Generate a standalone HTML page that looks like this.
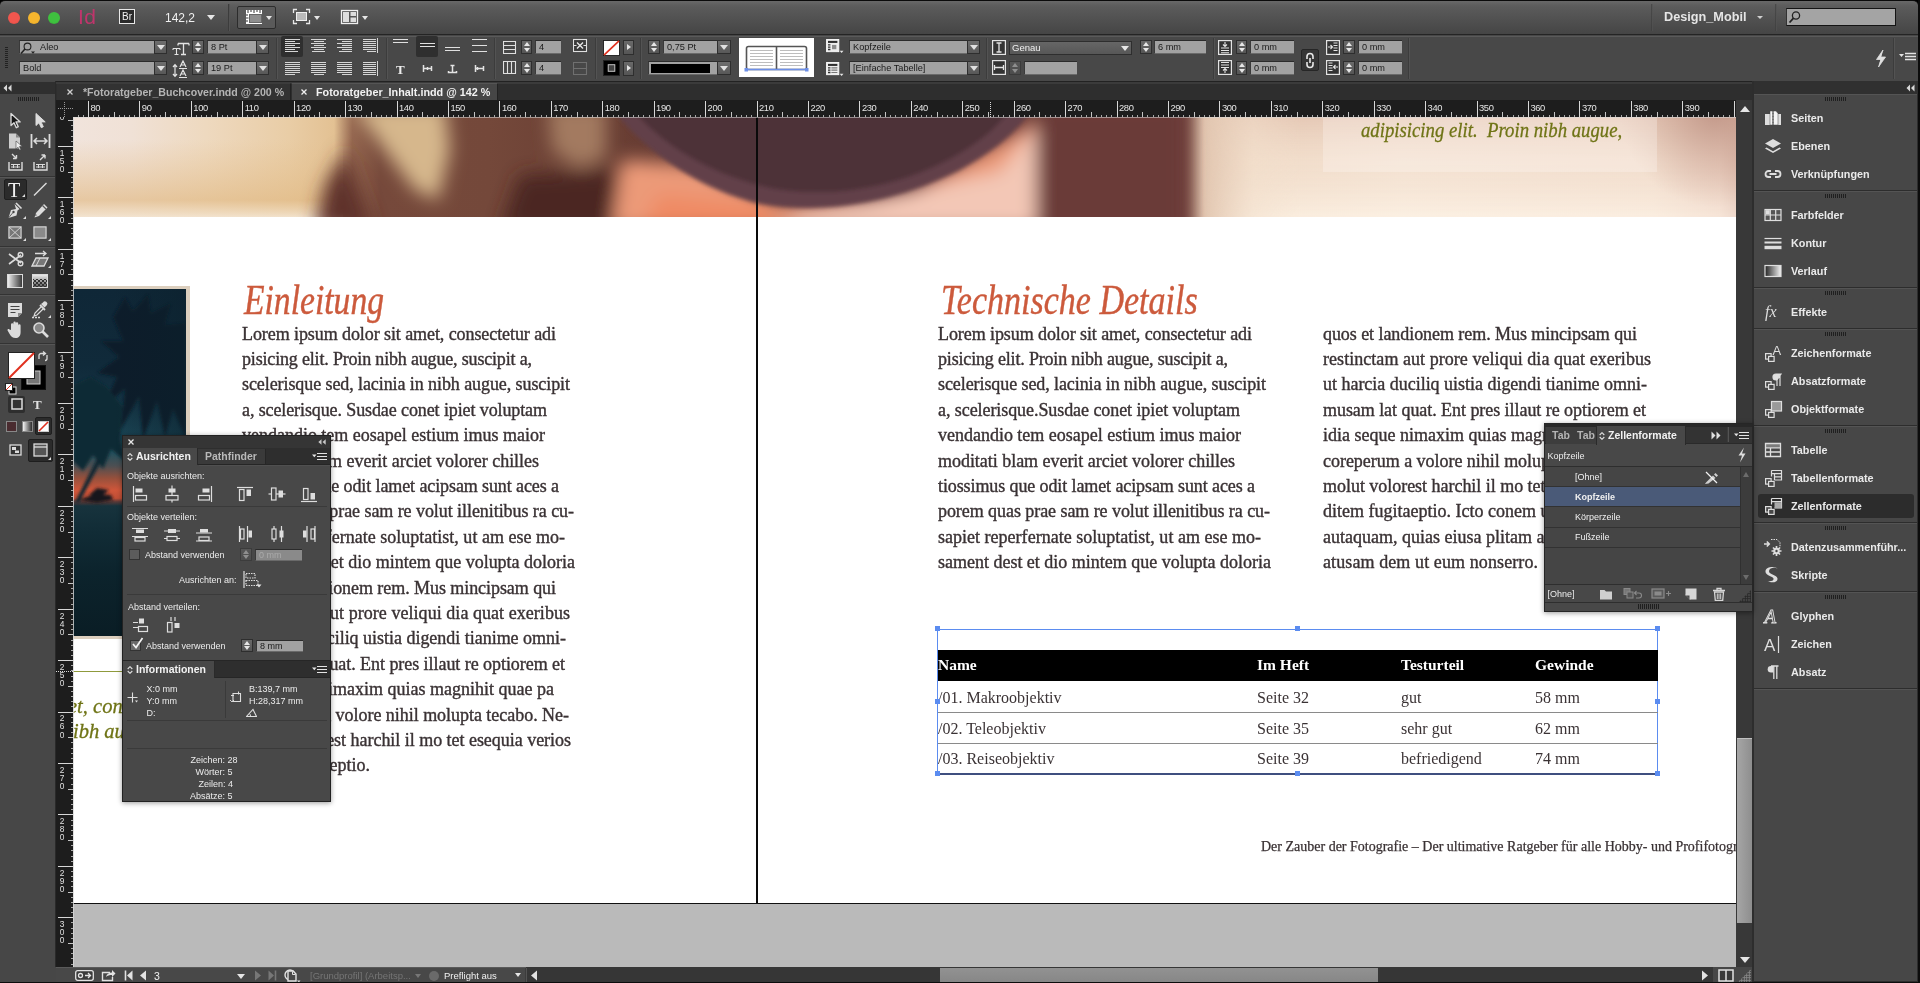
<!DOCTYPE html>
<html lang="de"><head><meta charset="utf-8"><title>InDesign – Fotoratgeber_Inhalt.indd</title>
<style>
html,body{margin:0;padding:0;width:1920px;height:983px;overflow:hidden;background:#474747;}
body{position:relative;font-family:"Liberation Sans",sans-serif;font-size:10px;color:#e8e8e8;}
div,span,svg{position:absolute;box-sizing:border-box;}
#root{left:0;top:0;width:1920px;height:983px;will-change:transform;overflow:hidden;}
.t{white-space:nowrap;line-height:1;}
.b{font-weight:bold;}
.fld{background:#a2a2a2;border-top:1px solid #2b2b2b;border-left:1px solid #3a3a3a;border-bottom:1px solid #6a6a6a;color:#1a1a1a;font-size:9.2px;}
.fld .t{left:3px;top:2px;}
.dd{background:linear-gradient(#6e6e6e,#585858);border:1px solid #2e2e2e;}
.dd:after{content:"";position:absolute;left:50%;top:50%;margin:-2px 0 0 -4px;border-left:4px solid transparent;border-right:4px solid transparent;border-top:5px solid #e0e0e0;}
.stp{background:linear-gradient(#6a6a6a,#555);border:1px solid #2e2e2e;}
.stp:before{content:"";position:absolute;left:50%;top:1px;margin-left:-3px;border-left:3px solid transparent;border-right:3px solid transparent;border-bottom:4px solid #e6e6e6;}
.stp:after{content:"";position:absolute;left:50%;bottom:1px;margin-left:-3px;border-left:3px solid transparent;border-right:3px solid transparent;border-top:4px solid #e6e6e6;}
.vsep{width:2px;background:linear-gradient(90deg,#3c3c3c 50%,#535353 50%);}
.body{font-family:"Liberation Serif",serif;color:#3a3234;font-size:18px;-webkit-text-stroke:0.38px #3a3234;}
.body .t{left:0;}
.script{font-family:"Liberation Serif",serif;font-style:italic;}
.ui9{font-size:9px;color:#ececec;}
</style></head><body><div id="root">
<div id="canvas" style="left:73px;top:117px;width:1663px;height:850px;background:#bababa;overflow:hidden;">
<div style="left:0;top:0;width:1663px;height:786px;background:#fff;"></div>
<svg style="left:0;top:0;" width="1663" height="100" viewBox="73 117 1663 100">
<defs>
<linearGradient id="bg1" gradientUnits="userSpaceOnUse" x1="73" x2="1736" y1="0" y2="0">
<stop offset="0" stop-color="#f1e4dc"/><stop offset="0.035" stop-color="#f0e1d6"/><stop offset="0.08" stop-color="#eed9bf"/><stop offset="0.13" stop-color="#e9cda6"/><stop offset="0.157" stop-color="#e3c193"/>
<stop offset="0.168" stop-color="#94664f"/><stop offset="0.185" stop-color="#76493b"/><stop offset="0.25" stop-color="#74483a"/><stop offset="0.32" stop-color="#6a3f34"/><stop offset="0.40" stop-color="#623731"/>
<stop offset="0.57" stop-color="#6b3b37"/><stop offset="0.655" stop-color="#693936"/><stop offset="0.668" stop-color="#80534a"/><stop offset="0.68" stop-color="#e2c6b0"/><stop offset="0.71" stop-color="#f3e0cd"/><stop offset="0.8" stop-color="#f7e8d9"/><stop offset="0.95" stop-color="#f5e3d4"/><stop offset="0.99" stop-color="#ecd0c2"/><stop offset="1" stop-color="#dcb9ac"/>
</linearGradient>
<linearGradient id="fadeb" x1="0" x2="0" y1="0" y2="1"><stop offset="0" stop-color="#e4bf8c" stop-opacity="0"/><stop offset="0.78" stop-color="#e1b983" stop-opacity="0.65"/><stop offset="0.9" stop-color="#ecd2ae" stop-opacity="0.7"/><stop offset="1" stop-color="#f3e4d0" stop-opacity="0.9"/></linearGradient>
<filter id="bl9" x="-10%" y="-30%" width="120%" height="160%"><feGaussianBlur stdDeviation="9"/></filter>
<filter id="bl3" x="-10%" y="-30%" width="120%" height="160%"><feGaussianBlur stdDeviation="2"/></filter>
</defs>
<rect x="73" y="117" width="1663" height="100" fill="url(#bg1)"/>
<rect x="73" y="140" width="270" height="77" fill="url(#fadeb)"/>
<g filter="url(#bl9)">
<polygon points="352,105 445,105 450,150 438,200 415,190 385,150" fill="#d6b78c"/>
<polygon points="548,105 606,105 606,158 578,168 552,150" fill="#a37a60"/>
<polygon points="325,185 345,150 375,230 315,230" fill="#5e312b"/>
<polygon points="520,175 620,170 630,230 500,230" fill="#4c2722"/>
<polygon points="622,160 700,165 780,205 900,198 1040,120 1040,230 612,230" fill="#ec9a78"/>
<polygon points="660,195 770,205 770,230 640,230" fill="#f08a64"/>
<polygon points="800,214 1000,172 1040,120 1040,230 780,230" fill="#f3c7b6"/>
<rect x="1036" y="100" width="152" height="135" fill="#6a3b37"/>
</g>
<g filter="url(#bl3)">
<path d="M606,100 C640,150 700,190 760,204 C830,216 900,200 960,170 C1000,148 1025,125 1036,100 Z" fill="#62404a"/>
<path d="M625,100 C660,148 720,178 775,189 C840,199 900,185 950,159 C985,139 1005,122 1014,100 Z" fill="#4e3039"/>
</g>
<defs><linearGradient id="rtop" x1="0" x2="0" y1="0" y2="1"><stop offset="0" stop-color="#d9b39f" stop-opacity=".55"/><stop offset="0.45" stop-color="#ecd3c0" stop-opacity=".3"/><stop offset="1" stop-color="#fff6ea" stop-opacity=".55"/></linearGradient>
<radialGradient id="rcorner" gradientUnits="userSpaceOnUse" cx="1715" cy="112" r="95"><stop offset="0" stop-color="#b98c7e" stop-opacity=".75"/><stop offset="1" stop-color="#c8a090" stop-opacity="0"/></radialGradient></defs>
<defs><linearGradient id="mfade" gradientUnits="userSpaceOnUse" x1="1200" x2="1300" y1="0" y2="0"><stop offset="0" stop-color="#000"/><stop offset="1" stop-color="#fff"/></linearGradient><mask id="mk1" maskUnits="userSpaceOnUse" x="1190" y="110" width="560" height="120"><rect x="1190" y="110" width="560" height="120" fill="url(#mfade)"/></mask></defs>
<rect x="1195" y="117" width="541" height="100" fill="url(#rtop)" mask="url(#mk1)"/>
<rect x="1600" y="117" width="136" height="100" fill="url(#rcorner)"/>
</svg>
<div style="left:1250px;top:0;width:334px;height:55px;background:rgba(255,250,246,0.3);"></div>
<div class="t script" style="left:1288px;top:2.500px;font-size:21.5px;color:#6f7416;-webkit-text-stroke:0.3px #6f7416;transform:scaleX(0.872);transform-origin:0 0;">adipisicing elit.&nbsp; Proin nibh augue,</div>
<div style="left:683px;top:0;width:2px;height:786px;background:#0a0a0a;"></div>
<div style="left:0;top:785.5px;width:1663px;height:1.5px;background:#111;"></div>
<div style="left:0;top:169px;width:117px;height:353px;background:#dccfbe;"></div>
<div style="left:0;top:172px;width:113px;height:347px;background:linear-gradient(#0f2737 0%,#102a3a 22%,#143444 33%,#1b4555 42%,#27505c 47.5%,#4d4f52 51%,#96503c 54.5%,#d0563a 58%,#c04f36 60.3%,#5a3a38 61.3%,#17333d 62.5%,#112c36 70%,#0c232c 82%,#0a1d25 100%);"></div>
<svg style="left:0;top:172px;" width="113" height="347" viewBox="0 0 113 347">
<defs><filter id="pb" x="-20%" y="-20%" width="140%" height="140%"><feGaussianBlur stdDeviation="1.6"/></filter>
<linearGradient id="pdk" x1="0" x2="1"><stop offset="0" stop-color="#0b202b" stop-opacity="0"/><stop offset="1" stop-color="#0b202b" stop-opacity=".55"/></linearGradient></defs>
<g filter="url(#pb)" fill="#0b1f2a">
<path d="M40,28 L52,8 L60,22 L75,5 L78,24 L98,14 L92,36 L113,34 L113,150 L100,120 L92,148 L84,112 L70,150 L66,108 L48,140 L52,100 L30,118 L44,88 L24,84 L46,68 L28,52 L50,52 Z"/>
<path d="M0,96 L18,88 L34,98 L50,118 L47,150 L52,172 L38,160 L30,180 L20,166 L10,182 L0,172 Z" fill="#0e2a36"/>
<path d="M24,170 L28,172 L6,214 L2,213 Z" fill="#0d2630"/>
<path d="M6,211 L22,205 L38,206 L40,211 L24,214 Z" fill="#15171d"/>
<path d="M16,206 L24,199 L36,201 L30,206 Z" fill="#15171d"/>
</g>
<rect x="40" y="0" width="73" height="150" fill="url(#pdk)"/>
</svg>
<div style="left:0;top:553.5px;width:200px;height:1.5px;background:#8f9a3c;"></div>
<div class="t script" style="left:-5px;top:579px;font-size:20.500px;color:#6f7416;-webkit-text-stroke:0.3px #6f7416;">et, con</div>
<div class="t script" style="left:0px;top:603.500px;font-size:20.500px;color:#6f7416;-webkit-text-stroke:0.3px #6f7416;">ibh aug</div>
<div class="t script" style="left:171px;top:161.500px;font-size:42px;color:#cc5a3c;-webkit-text-stroke:0.45px #cc5a3c;transform:scaleX(0.80);transform-origin:0 0;">Einleitung</div>
<div class="t script" style="left:867.500px;top:161.500px;font-size:42px;color:#cc5a3c;-webkit-text-stroke:0.45px #cc5a3c;transform:scaleX(0.81);transform-origin:0 0;">Technische Details</div>
<div class="body t" style="left:169px;top:207.5px;letter-spacing:-0.081px;">Lorem ipsum dolor sit amet, consectetur adi</div>
<div class="body t" style="left:169px;top:232.9px;letter-spacing:-0.174px;">pisicing elit. Proin nibh augue, suscipit a,</div>
<div class="body t" style="left:169px;top:258.3px;letter-spacing:-0.083px;">scelerisque sed, lacinia in nibh augue, suscipit</div>
<div class="body t" style="left:169px;top:283.7px;letter-spacing:-0.105px;">a, scelerisque. Susdae conet ipiet voluptam</div>
<div class="body t" style="left:169px;top:309.1px;letter-spacing:-0.012px;">vendandio tem eosapel estium imus maior</div>
<div class="body t" style="left:169px;top:334.5px;letter-spacing:-0.033px;">moditati blam everit arciet volorer chilles</div>
<div class="body t" style="left:169px;top:359.9px;letter-spacing:-0.103px;">tiossimus que odit lamet acipsam sunt aces a</div>
<div class="body t" style="left:169px;top:385.3px;letter-spacing:-0.063px;">porem quas prae sam re volut illenitibus ra cu-</div>
<div class="body t" style="left:169px;top:410.7px;letter-spacing:0.014px;">sapiet reperfernate soluptatist, ut am ese mo-</div>
<div class="body t" style="left:169px;top:436.1px;letter-spacing:-0.010px;">sament dest et dio mintem que volupta doloria</div>
<div class="body t" style="left:169px;top:461.5px;letter-spacing:-0.063px;">quos et landionem rem. Mus mincipsam qui</div>
<div class="body t" style="left:169px;top:486.9px;letter-spacing:0.047px;">restinctam aut prore veliqui dia quat exeribus</div>
<div class="body t" style="left:169px;top:512.3px;letter-spacing:-0.021px;">ut harcia duciliq uistia digendi tianime omni-</div>
<div class="body t" style="left:169px;top:537.7px;letter-spacing:-0.054px;">musam lat quat. Ent pres illaut re optiorem et</div>
<div class="body t" style="left:169px;top:563.1px;letter-spacing:0.002px;">idia seque nimaxim quias magnihit quae pa</div>
<div class="body t" style="left:169px;top:588.5px;letter-spacing:-0.032px;">coreperum a volore nihil molupta tecabo. Ne-</div>
<div class="body t" style="left:169px;top:613.9px;letter-spacing:-0.031px;">molut volorest harchil il mo tet esequia verios</div>
<div class="body t" style="left:169px;top:639.3px;letter-spacing:0.002px;">ditem fugitaeptio.</div>
<div class="body t" style="left:865px;top:207.5px;letter-spacing:-0.081px;">Lorem ipsum dolor sit amet, consectetur adi</div>
<div class="body t" style="left:865px;top:232.9px;letter-spacing:-0.174px;">pisicing elit. Proin nibh augue, suscipit a,</div>
<div class="body t" style="left:865px;top:258.3px;letter-spacing:-0.083px;">scelerisque sed, lacinia in nibh augue, suscipit</div>
<div class="body t" style="left:865px;top:283.7px;letter-spacing:-0.071px;">a, scelerisque.Susdae conet ipiet voluptam</div>
<div class="body t" style="left:865px;top:309.1px;letter-spacing:-0.012px;">vendandio tem eosapel estium imus maior</div>
<div class="body t" style="left:865px;top:334.5px;letter-spacing:-0.033px;">moditati blam everit arciet volorer chilles</div>
<div class="body t" style="left:865px;top:359.9px;letter-spacing:-0.103px;">tiossimus que odit lamet acipsam sunt aces a</div>
<div class="body t" style="left:865px;top:385.3px;letter-spacing:-0.063px;">porem quas prae sam re volut illenitibus ra cu-</div>
<div class="body t" style="left:865px;top:410.7px;letter-spacing:0.014px;">sapiet reperfernate soluptatist, ut am ese mo-</div>
<div class="body t" style="left:865px;top:436.1px;letter-spacing:-0.010px;">sament dest et dio mintem que volupta doloria</div>
<div class="body t" style="left:1250px;top:207.5px;letter-spacing:-0.063px;">quos et landionem rem. Mus mincipsam qui</div>
<div class="body t" style="left:1250px;top:232.9px;letter-spacing:0.047px;">restinctam aut prore veliqui dia quat exeribus</div>
<div class="body t" style="left:1250px;top:258.3px;letter-spacing:-0.021px;">ut harcia duciliq uistia digendi tianime omni-</div>
<div class="body t" style="left:1250px;top:283.7px;letter-spacing:-0.054px;">musam lat quat. Ent pres illaut re optiorem et</div>
<div class="body t" style="left:1250px;top:309.1px;letter-spacing:0.002px;">idia seque nimaxim quias magnihit quae pa</div>
<div class="body t" style="left:1250px;top:334.5px;letter-spacing:-0.032px;">coreperum a volore nihil molupta tecabo. Ne-</div>
<div class="body t" style="left:1250px;top:359.9px;letter-spacing:-0.031px;">molut volorest harchil il mo tet esequia verios</div>
<div class="body t" style="left:1250px;top:385.3px;">ditem fugitaeptio. Icto conem ut</div>
<div class="body t" style="left:1250px;top:410.7px;">autaquam, quias eiusa plitam a</div>
<div class="body t" style="left:1250px;top:436.1px;letter-spacing:0.098px;">atusam dem ut eum nonserro.</div>
<div style="left:864px;top:512px;width:721px;height:146px;border:1px solid #5b8cf0;"></div>
<div style="left:865px;top:533px;width:720px;height:31px;background:#000;"></div>
<div style="left:865px;top:595.0px;width:720px;height:1px;background:#8a8a8a;"></div>
<div style="left:865px;top:626.0px;width:720px;height:1px;background:#8a8a8a;"></div>
<div style="left:865px;top:656.0px;width:720px;height:1.5px;background:#3f4f7f;"></div>
<div class="t b" style="left:865px;top:540px;font-family:'Liberation Serif',serif;font-size:15.5px;color:#fff;">Name</div>
<div class="t b" style="left:1184px;top:540px;font-family:'Liberation Serif',serif;font-size:15.5px;color:#fff;">Im Heft</div>
<div class="t b" style="left:1328px;top:540px;font-family:'Liberation Serif',serif;font-size:15.5px;color:#fff;">Testurteil</div>
<div class="t b" style="left:1462px;top:540px;font-family:'Liberation Serif',serif;font-size:15.5px;color:#fff;">Gewinde</div>
<div class="t" style="left:865px;top:573px;font-family:'Liberation Serif',serif;font-size:16px;color:#3a3234;">/01. Makroobjektiv</div>
<div class="t" style="left:1184px;top:573px;font-family:'Liberation Serif',serif;font-size:16px;color:#3a3234;">Seite 32</div>
<div class="t" style="left:1328px;top:573px;font-family:'Liberation Serif',serif;font-size:16px;color:#3a3234;">gut</div>
<div class="t" style="left:1462px;top:573px;font-family:'Liberation Serif',serif;font-size:16px;color:#3a3234;">58 mm</div>
<div class="t" style="left:865px;top:604px;font-family:'Liberation Serif',serif;font-size:16px;color:#3a3234;">/02. Teleobjektiv</div>
<div class="t" style="left:1184px;top:604px;font-family:'Liberation Serif',serif;font-size:16px;color:#3a3234;">Seite 35</div>
<div class="t" style="left:1328px;top:604px;font-family:'Liberation Serif',serif;font-size:16px;color:#3a3234;">sehr gut</div>
<div class="t" style="left:1462px;top:604px;font-family:'Liberation Serif',serif;font-size:16px;color:#3a3234;">62 mm</div>
<div class="t" style="left:865px;top:634px;font-family:'Liberation Serif',serif;font-size:16px;color:#3a3234;">/03. Reiseobjektiv</div>
<div class="t" style="left:1184px;top:634px;font-family:'Liberation Serif',serif;font-size:16px;color:#3a3234;">Seite 39</div>
<div class="t" style="left:1328px;top:634px;font-family:'Liberation Serif',serif;font-size:16px;color:#3a3234;">befriedigend</div>
<div class="t" style="left:1462px;top:634px;font-family:'Liberation Serif',serif;font-size:16px;color:#3a3234;">74 mm</div>
<div style="left:862px;top:509px;width:5px;height:5px;background:#5b8cf0;"></div>
<div style="left:1222px;top:509px;width:5px;height:5px;background:#5b8cf0;"></div>
<div style="left:1582px;top:509px;width:5px;height:5px;background:#5b8cf0;"></div>
<div style="left:862px;top:582px;width:5px;height:5px;background:#5b8cf0;"></div>
<div style="left:1582px;top:582px;width:5px;height:5px;background:#5b8cf0;"></div>
<div style="left:862px;top:654px;width:5px;height:5px;background:#5b8cf0;"></div>
<div style="left:1222px;top:654px;width:5px;height:5px;background:#5b8cf0;"></div>
<div style="left:1582px;top:654px;width:5px;height:5px;background:#5b8cf0;"></div>
<div class="t" style="left:1188px;top:723px;font-family:'Liberation Serif',serif;font-size:14px;color:#3a3234;-webkit-text-stroke:0.25px #3a3234;">Der Zauber der Fotografie – Der ultimative Ratgeber für alle Hobby- und Profifotografen</div>
</div>
<!-- chrome -->
<div style="left:0;top:0;width:1920px;height:8px;background:#000;"></div>
<div style="left:0;top:0;width:1918px;height:35px;background:linear-gradient(#686868 0%,#5e5e5e 12%,#5a5a5a 20%,#454545 100%);border-bottom:1px solid #242424;border-top:1px solid #0a0a0a;border-radius:5px 5px 0 0;"></div>
<div style="left:8.0px;top:11.500px;width:12px;height:12px;border-radius:6px;background:radial-gradient(circle at 50% 40%,#f0564e 60%,#c8403a 100%);"></div>
<div style="left:27.5px;top:11.500px;width:12px;height:12px;border-radius:6px;background:radial-gradient(circle at 50% 40%,#f5b52e 60%,#d09a20 100%);"></div>
<div style="left:48.0px;top:11.500px;width:12px;height:12px;border-radius:6px;background:radial-gradient(circle at 50% 40%,#3fc13f 60%,#2a9a2c 100%);"></div>
<div class="t" style="left:78px;top:6px;font-size:21px;color:#c0356c;font-family:'Liberation Sans',sans-serif;letter-spacing:0.5px;">Id</div>
<div style="left:119px;top:9px;width:16px;height:15px;border:1px solid #e8e8e8;background:#2a2a2a;"></div><div class="t" style="left:122px;top:11.5px;font-size:10px;color:#f0f0f0;">Br</div>
<div class="t" style="left:165px;top:11.5px;font-size:12px;color:#f0f0f0;">142,2</div>
<div style="left:207.0px;top:15.0px;width:0;height:0;border-left:4.0px solid transparent;border-right:4.0px solid transparent;border-top:5px solid #e6e6e6;"></div>
<div class="vsep" style="left:228px;top:4px;height:27px;"></div>
<div style="left:237px;top:6px;width:39px;height:23px;background:#5a5a5a;border:1px solid #2c2c2c;border-radius:2px;"></div>
<svg style="left:245px;top:9px" width="20" height="16" viewBox="0 0 20 16"><rect x="1" y="1" width="16" height="14" fill="#fff"/><rect x="4.500" y="5.500" width="12" height="8" fill="#8e8e8e" stroke="#666"/><path d="M3,1v3M6,1v2M9,1v3M12,1v2M15,1v3M1,6h2M1,9h2.500M1,12h2" stroke="#333" stroke-width="1"/></svg>
<div style="left:265.5px;top:16.0px;width:0;height:0;border-left:3.5px solid transparent;border-right:3.5px solid transparent;border-top:4px solid #e6e6e6;"></div>
<svg style="left:292px;top:8px" width="20" height="18" viewBox="0 0 20 18"><path d="M1.5,5V1.5H5M14,1.5h3.5V5M17.5,12v3.5H14M5,15.5H1.5V12" fill="none" stroke="#e8e8e8" stroke-width="1.3"/><rect x="4.5" y="4.5" width="10" height="8" fill="#bbb" stroke="#f0f0f0"/></svg>
<div style="left:313.5px;top:16.0px;width:0;height:0;border-left:3.5px solid transparent;border-right:3.5px solid transparent;border-top:4px solid #e6e6e6;"></div>
<svg style="left:340px;top:8px" width="20" height="18" viewBox="0 0 20 18"><rect x="1.5" y="2.5" width="16" height="13" fill="#555" stroke="#f0f0f0" stroke-width="1.3"/><rect x="3" y="4" width="6" height="10" fill="#ddd"/><rect x="10.5" y="4" width="5.5" height="4" fill="#ddd"/><rect x="10.5" y="9.5" width="5.5" height="4.5" fill="#ddd"/></svg>
<div style="left:361.5px;top:16.0px;width:0;height:0;border-left:3.5px solid transparent;border-right:3.5px solid transparent;border-top:4px solid #e6e6e6;"></div>
<div class="vsep" style="left:1651px;top:4px;height:27px;opacity:.6"></div><div class="vsep" style="left:1775px;top:4px;height:27px;opacity:.6"></div>
<div class="t b" style="left:1664px;top:11px;font-size:12.700px;color:#e6e6e6;">Design_Mobil</div>
<div style="left:1757.0px;top:15.8px;width:0;height:0;border-left:3.0px solid transparent;border-right:3.0px solid transparent;border-top:3px solid #d0d0d0;"></div>
<div style="left:1786px;top:8px;width:110px;height:18px;background:#a4a4a4;border:1px solid #141414;border-left-color:#333;"></div>
<svg style="left:1788px;top:10px" width="14" height="14" viewBox="0 0 14 14"><circle cx="8" cy="5.5" r="3.6" fill="none" stroke="#222" stroke-width="1.3"/><path d="M5.5,8.2L1.5,12.5" stroke="#222" stroke-width="1.8"/></svg>
<div style="left:0;top:36px;width:1920px;height:46px;background:#484848;border-top:1px solid #5a5a5a;border-bottom:1px solid #222;"></div>
<div style="left:5px;top:47px;width:3px;height:21px;background:repeating-linear-gradient(#222 0,#222 1px,transparent 1px,transparent 2px);"></div>
<div class="fld" style="left:19px;top:40.0px;width:135px;height:14px;"><span class="t"><span style="position:static;margin-left:17px">Aleo</span></span></div>
<div class="dd" style="left:154px;top:40.0px;width:13px;height:14px;"></div>
<svg style="left:20px;top:42px" width="18" height="13" viewBox="0 0 18 13"><circle cx="7.5" cy="4.5" r="3.4" fill="none" stroke="#222" stroke-width="1.1"/><path d="M5,7L1,11.5" stroke="#222" stroke-width="1.6"/><path d="M11,9.5h4l-2,2.2z" fill="#222"/></svg>
<div class="fld" style="left:19px;top:61.0px;width:135px;height:14px;"><span class="t">Bold</span></div>
<div class="dd" style="left:154px;top:61.0px;width:13px;height:14px;"></div>
<svg style="left:172px;top:40px" width="18" height="17" viewBox="0 0 18 17"><g fill="none" stroke="#e4e4e4" stroke-width="1.3"><path d="M6,3.5h11M11.5,3.5v11M9,14.5h5M6,3.5v2M17,3.5v2"/><path d="M1,8.5h7M4.5,8.5v6M2.5,14.5h4M1,8.5v1.5M8,8.5v1.5" stroke-width="1.1"/></g></svg>
<svg style="left:172px;top:60px" width="18" height="18" viewBox="0 0 18 18"><g fill="none" stroke="#e4e4e4" stroke-width="1.2"><path d="M8,7L11,1l3,6M9,5h4M7,8.5h8M8,16l3-6 3,6M9,14h4M7,17.5h8"/><path d="M3,5v11M1,7l2-2.4 2,2.4M1,14l2,2.4 2-2.4"/></g></svg>
<div class="stp" style="left:192px;top:40.0px;width:12px;height:14px;"></div>
<div class="fld" style="left:207px;top:40.0px;width:49px;height:14px;"><span class="t">8 Pt</span></div>
<div class="dd" style="left:256px;top:40.0px;width:13px;height:14px;"></div>
<div class="stp" style="left:192px;top:61.0px;width:12px;height:14px;"></div>
<div class="fld" style="left:207px;top:61.0px;width:49px;height:14px;"><span class="t">19 Pt</span></div>
<div class="dd" style="left:256px;top:61.0px;width:13px;height:14px;"></div>
<div class="vsep" style="left:276px;top:38px;height:41px;"></div>
<div style="left:281px;top:36px;width:22px;height:21px;background:#2f2f2f;border-radius:2px;"></div>
<svg style="left:285.0px;top:39.0px" width="15" height="13" viewBox="0 0 15 13" shape-rendering="crispEdges"><rect x="0.0" y="0" width="15.0" height="1" fill="#d6d6d6"/><rect x="0.0" y="2" width="10.0" height="1" fill="#d6d6d6"/><rect x="0.0" y="4" width="15.0" height="1" fill="#d6d6d6"/><rect x="0.0" y="6" width="10.0" height="1" fill="#d6d6d6"/><rect x="0.0" y="8" width="15.0" height="1" fill="#d6d6d6"/><rect x="0.0" y="10" width="10.0" height="1" fill="#d6d6d6"/><rect x="0.0" y="12" width="13.0" height="1" fill="#d6d6d6"/></svg>
<svg style="left:311.0px;top:39.0px" width="15" height="13" viewBox="0 0 15 13" shape-rendering="crispEdges"><rect x="0.0" y="0" width="15.0" height="1" fill="#d6d6d6"/><rect x="2.5" y="2" width="10.0" height="1" fill="#d6d6d6"/><rect x="0.0" y="4" width="15.0" height="1" fill="#d6d6d6"/><rect x="2.5" y="6" width="10.0" height="1" fill="#d6d6d6"/><rect x="0.0" y="8" width="15.0" height="1" fill="#d6d6d6"/><rect x="2.5" y="10" width="10.0" height="1" fill="#d6d6d6"/><rect x="1.0" y="12" width="13.0" height="1" fill="#d6d6d6"/></svg>
<svg style="left:337.0px;top:39.0px" width="15" height="13" viewBox="0 0 15 13" shape-rendering="crispEdges"><rect x="0.0" y="0" width="15.0" height="1" fill="#d6d6d6"/><rect x="5.0" y="2" width="10.0" height="1" fill="#d6d6d6"/><rect x="0.0" y="4" width="15.0" height="1" fill="#d6d6d6"/><rect x="5.0" y="6" width="10.0" height="1" fill="#d6d6d6"/><rect x="0.0" y="8" width="15.0" height="1" fill="#d6d6d6"/><rect x="5.0" y="10" width="10.0" height="1" fill="#d6d6d6"/><rect x="2.0" y="12" width="13.0" height="1" fill="#d6d6d6"/></svg>
<svg style="left:363.0px;top:39.0px" width="13" height="13" viewBox="0 0 13 13" shape-rendering="crispEdges"><rect x="0.0" y="0" width="13.0" height="1" fill="#d6d6d6"/><rect x="0.0" y="2" width="13.0" height="1" fill="#d6d6d6"/><rect x="0.0" y="4" width="13.0" height="1" fill="#d6d6d6"/><rect x="0.0" y="6" width="13.0" height="1" fill="#d6d6d6"/><rect x="0.0" y="8" width="13.0" height="1" fill="#d6d6d6"/><rect x="0.0" y="10" width="13.0" height="1" fill="#d6d6d6"/><rect x="4.0" y="12" width="9.0" height="1" fill="#d6d6d6"/></svg>
<div style="left:377px;top:38px;width:1px;height:15px;background:#d6d6d6"></div>
<svg style="left:285.0px;top:62.0px" width="15" height="13" viewBox="0 0 15 13" shape-rendering="crispEdges"><rect x="0.0" y="0" width="15.0" height="1" fill="#d6d6d6"/><rect x="0.0" y="2" width="15.0" height="1" fill="#d6d6d6"/><rect x="0.0" y="4" width="15.0" height="1" fill="#d6d6d6"/><rect x="0.0" y="6" width="15.0" height="1" fill="#d6d6d6"/><rect x="0.0" y="8" width="15.0" height="1" fill="#d6d6d6"/><rect x="0.0" y="10" width="15.0" height="1" fill="#d6d6d6"/><rect x="0.0" y="12" width="10.0" height="1" fill="#d6d6d6"/></svg>
<svg style="left:311.0px;top:62.0px" width="15" height="13" viewBox="0 0 15 13" shape-rendering="crispEdges"><rect x="0.0" y="0" width="15.0" height="1" fill="#d6d6d6"/><rect x="0.0" y="2" width="15.0" height="1" fill="#d6d6d6"/><rect x="0.0" y="4" width="15.0" height="1" fill="#d6d6d6"/><rect x="0.0" y="6" width="15.0" height="1" fill="#d6d6d6"/><rect x="0.0" y="8" width="15.0" height="1" fill="#d6d6d6"/><rect x="0.0" y="10" width="15.0" height="1" fill="#d6d6d6"/><rect x="2.5" y="12" width="10.0" height="1" fill="#d6d6d6"/></svg>
<svg style="left:337.0px;top:62.0px" width="15" height="13" viewBox="0 0 15 13" shape-rendering="crispEdges"><rect x="0.0" y="0" width="15.0" height="1" fill="#d6d6d6"/><rect x="0.0" y="2" width="15.0" height="1" fill="#d6d6d6"/><rect x="0.0" y="4" width="15.0" height="1" fill="#d6d6d6"/><rect x="0.0" y="6" width="15.0" height="1" fill="#d6d6d6"/><rect x="0.0" y="8" width="15.0" height="1" fill="#d6d6d6"/><rect x="0.0" y="10" width="15.0" height="1" fill="#d6d6d6"/><rect x="5.0" y="12" width="10.0" height="1" fill="#d6d6d6"/></svg>
<svg style="left:363.0px;top:62.0px" width="13" height="13" viewBox="0 0 13 13" shape-rendering="crispEdges"><rect x="0.0" y="0" width="13.0" height="1" fill="#d6d6d6"/><rect x="0.0" y="2" width="13.0" height="1" fill="#d6d6d6"/><rect x="0.0" y="4" width="13.0" height="1" fill="#d6d6d6"/><rect x="0.0" y="6" width="13.0" height="1" fill="#d6d6d6"/><rect x="0.0" y="8" width="13.0" height="1" fill="#d6d6d6"/><rect x="0.0" y="10" width="13.0" height="1" fill="#d6d6d6"/><rect x="0.0" y="12" width="13.0" height="1" fill="#d6d6d6"/></svg>
<div style="left:377px;top:61px;width:1px;height:15px;background:#d6d6d6"></div>
<div class="vsep" style="left:386px;top:38px;height:41px;"></div>
<div style="left:416px;top:36px;width:22px;height:21px;background:#2f2f2f;border-radius:2px;"></div>
<svg style="left:393.0px;top:39.4px" width="15" height="4" viewBox="0 0 15 4" shape-rendering="crispEdges"><rect x="0.0" y="0" width="15.0" height="1.3" fill="#e0e0e0"/><rect x="0.0" y="3" width="15.0" height="1.3" fill="#e0e0e0"/></svg>
<svg style="left:420.0px;top:43.4px" width="15" height="4" viewBox="0 0 15 4" shape-rendering="crispEdges"><rect x="0.0" y="0" width="15.0" height="1.3" fill="#e0e0e0"/><rect x="0.0" y="3" width="15.0" height="1.3" fill="#e0e0e0"/></svg>
<svg style="left:445.0px;top:47.4px" width="15" height="4" viewBox="0 0 15 4" shape-rendering="crispEdges"><rect x="0.0" y="0" width="15.0" height="1.3" fill="#e0e0e0"/><rect x="0.0" y="3" width="15.0" height="1.3" fill="#e0e0e0"/></svg>
<svg style="left:472.0px;top:38.9px" width="15" height="13" viewBox="0 0 15 13" shape-rendering="crispEdges"><rect x="0.0" y="0" width="15.0" height="1.3" fill="#e0e0e0"/><rect x="0.0" y="6" width="15.0" height="1.3" fill="#e0e0e0"/><rect x="0.0" y="12" width="15.0" height="1.3" fill="#e0e0e0"/></svg>
<div class="t b" style="left:396px;top:62.500px;font-family:'Liberation Serif',serif;font-size:13px;color:#ececec;">T</div>
<svg style="left:422px;top:63px" width="11" height="11" viewBox="0 0 11 11"><path d="M1.500,2v7M1.500,5.500h8M9.500,3v5M5.500,4v3" fill="none" stroke="#e4e4e4" stroke-width="1.500"/></svg>
<svg style="left:447px;top:63px" width="11" height="11" viewBox="0 0 11 11"><path d="M1.500,8v1.500h8V8M5.500,9.500V2.500M3.500,2.500h4" fill="none" stroke="#e4e4e4" stroke-width="1.500"/></svg>
<svg style="left:474px;top:63px" width="11" height="11" viewBox="0 0 11 11"><path d="M1.500,2v7M1.500,5.500h8M9.500,3v5M3.500,4v3" fill="none" stroke="#e4e4e4" stroke-width="1.500"/></svg>
<div class="vsep" style="left:494px;top:38px;height:41px;"></div>
<svg style="left:503px;top:40px" width="14" height="15" viewBox="0 0 14 15"><path d="M0.5,1.5h12v12h-12zM0.5,5.5h12M0.5,9.5h12" fill="none" stroke="#e0e0e0" stroke-width="1.1"/></svg>
<svg style="left:503px;top:60px" width="14" height="15" viewBox="0 0 14 15"><path d="M0.5,1.5h12v12h-12zM4.5,1.5v12M8.5,1.5v12" fill="none" stroke="#e0e0e0" stroke-width="1.1"/></svg>
<div class="stp" style="left:521px;top:40.0px;width:11px;height:14px;"></div>
<div class="fld" style="left:535px;top:40.0px;width:26px;height:14px;"><span class="t">4</span></div>
<div class="stp" style="left:521px;top:61.0px;width:11px;height:14px;"></div>
<div class="fld" style="left:535px;top:61.0px;width:26px;height:14px;"><span class="t">4</span></div>
<svg style="left:573px;top:38px" width="15" height="15" viewBox="0 0 15 15"><rect x="0.5" y="1.5" width="13" height="12" fill="#3a3a3a" stroke="#e0e0e0" stroke-width="1.1"/><path d="M4,4.5l6,6M10,4.5l-6,6" stroke="#e8e8e8" stroke-width="1.4"/><path d="M0.5,7.5h3M10.5,7.5h3" stroke="#e0e0e0"/></svg>
<svg style="left:573px;top:61px" width="15" height="15" viewBox="0 0 15 15"><path d="M0.5,1.5h13v12h-13zM0.5,7.5h13" fill="none" stroke="#707070" stroke-width="1.1"/></svg>
<div class="vsep" style="left:595px;top:38px;height:41px;"></div>
<svg style="left:603px;top:39.500px" width="17" height="16" viewBox="0 0 18 17"><rect x="0.5" y="0.5" width="17" height="16" fill="#fff" stroke="#222"/><path d="M1,16L17,1" stroke="#e0301e" stroke-width="1.8"/></svg>
<svg style="left:603px;top:60px" width="17" height="16" viewBox="0 0 18 17"><rect x="0.5" y="0.5" width="17" height="16" fill="#000" stroke="#222"/><rect x="5.5" y="5" width="7" height="7" fill="#444" stroke="#ccc"/></svg>
<div style="left:623px;top:40px;width:11px;height:15px;background:linear-gradient(#6a6a6a,#555);border:1px solid #2e2e2e;"></div><div style="left:627px;top:44px;width:0;height:0;border-top:3.5px solid transparent;border-bottom:3.5px solid transparent;border-left:4.5px solid #e6e6e6;"></div>
<div style="left:623px;top:61px;width:11px;height:15px;background:linear-gradient(#6a6a6a,#555);border:1px solid #2e2e2e;"></div><div style="left:627px;top:65px;width:0;height:0;border-top:3.5px solid transparent;border-bottom:3.5px solid transparent;border-left:4.5px solid #e6e6e6;"></div>
<div class="vsep" style="left:640px;top:38px;height:41px;"></div>
<div class="stp" style="left:648px;top:40.0px;width:12px;height:14px;"></div>
<div class="fld" style="left:663px;top:40.0px;width:54px;height:14px;"><span class="t">0,75 Pt</span></div>
<div class="dd" style="left:717px;top:40.0px;width:14px;height:14px;"></div>
<div class="fld" style="left:648px;top:61.0px;width:69px;height:14px;"></div>
<div style="left:651px;top:64px;width:59px;height:9px;background:#000;"></div>
<div class="dd" style="left:717px;top:61.0px;width:14px;height:14px;"></div>
<svg style="left:739px;top:38px" width="75" height="39" viewBox="0 0 75 39"><rect width="75" height="39" fill="#fff"/><rect x="7.5" y="8.500" width="60" height="23" rx="2" fill="#fff" stroke="#555" stroke-width="1.6"/><path d="M37.500,8.500v23" stroke="#555" stroke-width="1.6"/><g stroke="#bdbdbd" stroke-width="1"><path d="M11,12.500h23M11,15.500h23M11,18.500h23M11,21.500h23M11,24.500h23M11,27.500h23M41,12.500h23M41,15.500h23M41,18.500h23M41,21.500h23M41,24.500h23M41,27.500h23"/></g><path d="M7,31.500h61" stroke="#6d8fe8" stroke-width="1.6"/><rect x="5.500" y="30" width="3.500" height="3.500" fill="#6d8fe8"/><rect x="66" y="30" width="3.500" height="3.500" fill="#6d8fe8"/></svg>
<svg style="left:825.5px;top:39px" width="19" height="15" viewBox="0 0 20 16"><rect x="0.5" y="0.5" width="13" height="13" fill="#ededed" stroke="#fafafa"/><rect x="2" y="2" width="10" height="2.2" fill="#2e2e2e"/><path d="M2,6.2h2.6M2,8.7h2.6M2,11.2h2.6" stroke="#2e2e2e" stroke-width="1.4"/><rect x="6.3" y="6.3" width="4.6" height="4.6" fill="#8c8c8c"/><path d="M14.5,12.5h4l-2,2.3z" fill="#e8e8e8"/></svg>
<svg style="left:825.5px;top:62px" width="19" height="15" viewBox="0 0 20 16"><rect x="0.5" y="0.5" width="13" height="13" fill="#ededed" stroke="#fafafa"/><rect x="2" y="2" width="10" height="2.2" fill="#2e2e2e"/><path d="M2,6.2h2.6M2,8.7h2.6M2,11.2h2.6" stroke="#2e2e2e" stroke-width="1.4"/><path d="M5.6,6.2h6.4M5.6,8.7h6.4M5.6,11.2h6.4" stroke="#777" stroke-width="1.2"/><path d="M14.5,12.5h4l-2,2.3z" fill="#e8e8e8"/></svg>
<div class="fld" style="left:849px;top:40.0px;width:118px;height:14px;"><span class="t">Kopfzeile</span></div>
<div class="dd" style="left:967px;top:40.0px;width:13px;height:14px;"></div>
<div class="fld" style="left:849px;top:61.0px;width:118px;height:14px;"><span class="t">[Einfache Tabelle]</span></div>
<div class="dd" style="left:967px;top:61.0px;width:13px;height:14px;"></div>
<div class="vsep" style="left:986px;top:38px;height:41px;"></div>
<svg style="left:992px;top:40px" width="14" height="15" viewBox="0 0 14 15"><rect x="0.6" y="0.6" width="12.800" height="13.800" fill="#333" stroke="#e4e4e4" stroke-width="1.2"/><path d="M7,3v9M4.500,3h5M4.500,12h5" stroke="#e4e4e4" stroke-width="1.3"/></svg>
<svg style="left:992px;top:60px" width="14" height="15" viewBox="0 0 14 15"><rect x="0.6" y="0.6" width="12.800" height="13.800" fill="#333" stroke="#e4e4e4" stroke-width="1.2"/><path d="M2.500,7.500h9M2.500,5v5M11.500,5v5" stroke="#e4e4e4" stroke-width="1.3"/></svg>
<div style="left:1009px;top:41px;width:123px;height:14px;background:linear-gradient(#666,#575757);border:1px solid #2e2e2e;"></div><div class="t" style="left:1012px;top:43px;font-size:9.500px;color:#f0f0f0;">Genau</div>
<div style="left:1121.0px;top:46.0px;width:0;height:0;border-left:4.0px solid transparent;border-right:4.0px solid transparent;border-top:5px solid #e6e6e6;"></div>
<div class="stp" style="left:1140px;top:40.0px;width:12px;height:14px;"></div>
<div class="fld" style="left:1154px;top:40.0px;width:52px;height:14px;"><span class="t">6 mm</span></div>
<div class="stp" style="left:1009px;top:61.0px;width:12px;height:14px;opacity:.45;"></div>
<div class="fld" style="left:1024px;top:61.0px;width:53px;height:14px;"></div>
<div class="vsep" style="left:1213px;top:38px;height:41px;"></div>
<svg style="left:1218px;top:40px" width="14" height="15" viewBox="0 0 14 15"><rect x="0.6" y="0.6" width="12.800" height="13.800" fill="#333" stroke="#e4e4e4" stroke-width="1.2"/><path d="M3,8h8M3,10.500h8M3,12.800h8M7,2v4M5,4.500l2,2 2-2" stroke="#e4e4e4" stroke-width="1.1" fill="none"/></svg>
<svg style="left:1218px;top:60px" width="14" height="15" viewBox="0 0 14 15"><rect x="0.6" y="0.6" width="12.800" height="13.800" fill="#333" stroke="#e4e4e4" stroke-width="1.2"/><path d="M3,2.500h8M3,5h8M3,7.500h8M7,13v-4M5,10.500l2-2 2,2" stroke="#e4e4e4" stroke-width="1.1" fill="none"/></svg>
<div class="stp" style="left:1236px;top:40.0px;width:11px;height:14px;"></div>
<div class="fld" style="left:1250px;top:40.0px;width:44px;height:14px;"><span class="t">0 mm</span></div>
<div class="stp" style="left:1236px;top:61.0px;width:11px;height:14px;"></div>
<div class="fld" style="left:1250px;top:61.0px;width:44px;height:14px;"><span class="t">0 mm</span></div>
<div style="left:1301px;top:49px;width:18px;height:22px;background:#363636;border:1px solid #262626;border-radius:2px;"></div>
<svg style="left:1304px;top:52px" width="12" height="17" viewBox="0 0 12 17"><path d="M3,7V4.500a3,3 0 0 1 6,0V7M3,10v2.500a3,3 0 0 0 6,0V10M6,6v5" fill="none" stroke="#e8e8e8" stroke-width="1.6"/></svg>
<svg style="left:1326px;top:40px" width="14" height="15" viewBox="0 0 14 15"><rect x="0.6" y="0.6" width="12.800" height="13.800" fill="#333" stroke="#e4e4e4" stroke-width="1.2"/><path d="M7.500,3h4M7.500,5.500h4M7.500,8h4M7.500,10.500h4M2,7h4M4.500,5l2,2-2,2" stroke="#e4e4e4" stroke-width="1.1" fill="none"/></svg>
<svg style="left:1326px;top:60px" width="14" height="15" viewBox="0 0 14 15"><rect x="0.6" y="0.6" width="12.800" height="13.800" fill="#333" stroke="#e4e4e4" stroke-width="1.2"/><path d="M2.500,3h4M2.500,5.500h4M2.500,8h4M2.500,10.500h4M12,7h-4M9.500,5l-2,2 2,2" stroke="#e4e4e4" stroke-width="1.1" fill="none"/></svg>
<div class="stp" style="left:1343px;top:40.0px;width:12px;height:14px;"></div>
<div class="fld" style="left:1358px;top:40.0px;width:44px;height:14px;"><span class="t">0 mm</span></div>
<div class="stp" style="left:1343px;top:61.0px;width:12px;height:14px;"></div>
<div class="fld" style="left:1358px;top:61.0px;width:44px;height:14px;"><span class="t">0 mm</span></div>
<div class="vsep" style="left:1408px;top:38px;height:41px;"></div>
<svg style="left:1874px;top:49px" width="14" height="19" viewBox="0 0 14 19"><path d="M9,1L2.500,10.500h4.500L4.500,18M9,1L6.500,8h5L4.500,18" fill="#e0e0e0" stroke="#e0e0e0" stroke-width="0.8" stroke-linejoin="round"/></svg>
<div class="vsep" style="left:1893px;top:38px;height:41px;"></div>
<svg style="left:1899px;top:51px" width="17" height="12" viewBox="0 0 17 12"><path d="M0,3h5l-2.500,3z" fill="#e4e4e4"/><path d="M6,2.500h11M6,5.500h11M6,8.500h11" stroke="#e4e4e4" stroke-width="1.3"/></svg>
<div style="left:0;top:82px;width:1920px;height:19px;background:#2e2e2e;border-top:2px solid #3b3b3b;"></div>
<div style="left:57px;top:83px;width:234px;height:18px;background:#323232;border-right:1px solid #222;border-top:1px solid #3c3c3c;"></div>
<div style="left:292px;top:83px;width:206px;height:18px;background:#464646;border-right:1px solid #222;border-top:1px solid #555;"></div>
<svg style="left:66px;top:88px" width="8" height="8" viewBox="0 0 8 8"><path d="M1.500,1.500l5,5M6.500,1.500l-5,5" stroke="#cfcfcf" stroke-width="1.300"/></svg>
<svg style="left:300px;top:88px" width="8" height="8" viewBox="0 0 8 8"><path d="M1.500,1.500l5,5M6.500,1.500l-5,5" stroke="#f0f0f0" stroke-width="1.300"/></svg>
<div class="t b" style="left:83px;top:87px;font-size:10.600px;color:#b4b4b4;">*Fotoratgeber_Buchcover.indd @ 200 %</div>
<div class="t b" style="left:316px;top:87px;font-size:10.800px;color:#f2f2f2;">Fotoratgeber_Inhalt.indd @ 142 %</div>
<div style="left:56px;top:100px;width:1680px;height:17px;background:#1d1d1d;"></div>
<div style="left:56px;top:100px;width:17px;height:867px;background:#1d1d1d;"></div>
<svg style="left:73px;top:100px" width="1663" height="17" viewBox="73 0 1663 17"><g stroke="#d8d8d8" stroke-width="1" shape-rendering="crispEdges"><path d="M88.4,1V17M139.8,1V17M191.3,1V17M242.7,1V17M294.1,1V17M345.6,1V17M397,1V17M448.4,1V17M499.9,1V17M551.3,1V17M602.7,1V17M654.1,1V17M705.6,1V17M757,1V17M808.4,1V17M859.9,1V17M911.3,1V17M962.7,1V17M1014.1,1V17M1065.6,1V17M1117,1V17M1168.4,1V17M1219.9,1V17M1271.3,1V17M1322.7,1V17M1374.2,1V17M1425.6,1V17M1477,1V17M1528.4,1V17M1579.9,1V17M1631.3,1V17M1682.7,1V17M1734.2,1V17"/><path d="M114.1,12V17M165.6,12V17M217,12V17M268.4,12V17M319.8,12V17M371.3,12V17M422.7,12V17M474.1,12V17M525.6,12V17M577,12V17M628.4,12V17M679.9,12V17M731.3,12V17M782.7,12V17M834.1,12V17M885.6,12V17M937,12V17M988.4,12V17M1039.9,12V17M1091.3,12V17M1142.7,12V17M1194.2,12V17M1245.6,12V17M1297,12V17M1348.4,12V17M1399.9,12V17M1451.3,12V17M1502.7,12V17M1554.2,12V17M1605.6,12V17M1657,12V17M1708.5,12V17" stroke-opacity=".9"/><path d="M78.1,14.5V17M83.3,14.5V17M93.6,14.5V17M98.7,14.5V17M103.8,14.5V17M109,14.5V17M119.3,14.5V17M124.4,14.5V17M129.6,14.5V17M134.7,14.5V17M145,14.5V17M150.1,14.5V17M155.3,14.5V17M160.4,14.5V17M170.7,14.5V17M175.8,14.5V17M181,14.5V17M186.1,14.5V17M196.4,14.5V17M201.6,14.5V17M206.7,14.5V17M211.8,14.5V17M222.1,14.5V17M227.3,14.5V17M232.4,14.5V17M237.6,14.5V17M247.8,14.5V17M253,14.5V17M258.1,14.5V17M263.3,14.5V17M273.6,14.5V17M278.7,14.5V17M283.8,14.5V17M289,14.5V17M299.3,14.5V17M304.4,14.5V17M309.6,14.5V17M314.7,14.5V17M325,14.5V17M330.1,14.5V17M335.3,14.5V17M340.4,14.5V17M350.7,14.5V17M355.8,14.5V17M361,14.5V17M366.1,14.5V17M376.4,14.5V17M381.6,14.5V17M386.7,14.5V17M391.8,14.5V17M402.1,14.5V17M407.3,14.5V17M412.4,14.5V17M417.6,14.5V17M427.8,14.5V17M433,14.5V17M438.1,14.5V17M443.3,14.5V17M453.6,14.5V17M458.7,14.5V17M463.8,14.5V17M469,14.5V17M479.3,14.5V17M484.4,14.5V17M489.6,14.5V17M494.7,14.5V17M505,14.5V17M510.1,14.5V17M515.3,14.5V17M520.4,14.5V17M530.7,14.5V17M535.9,14.5V17M541,14.5V17M546.1,14.5V17M556.4,14.5V17M561.6,14.5V17M566.7,14.5V17M571.9,14.5V17M582.1,14.5V17M587.3,14.5V17M592.4,14.5V17M597.6,14.5V17M607.9,14.5V17M613,14.5V17M618.1,14.5V17M623.3,14.5V17M633.6,14.5V17M638.7,14.5V17M643.9,14.5V17M649,14.5V17M659.3,14.5V17M664.4,14.5V17M669.6,14.5V17M674.7,14.5V17M685,14.5V17M690.1,14.5V17M695.3,14.5V17M700.4,14.5V17M710.7,14.5V17M715.9,14.5V17M721,14.5V17M726.1,14.5V17M736.4,14.5V17M741.6,14.5V17M746.7,14.5V17M751.9,14.5V17M762.1,14.5V17M767.3,14.5V17M772.4,14.5V17M777.6,14.5V17M787.9,14.5V17M793,14.5V17M798.1,14.5V17M803.3,14.5V17M813.6,14.5V17M818.7,14.5V17M823.9,14.5V17M829,14.5V17M839.3,14.5V17M844.4,14.5V17M849.6,14.5V17M854.7,14.5V17M865,14.5V17M870.1,14.5V17M875.3,14.5V17M880.4,14.5V17M890.7,14.5V17M895.9,14.5V17M901,14.5V17M906.1,14.5V17M916.4,14.5V17M921.6,14.5V17M926.7,14.5V17M931.9,14.5V17M942.1,14.5V17M947.3,14.5V17M952.4,14.5V17M957.6,14.5V17M967.9,14.5V17M973,14.5V17M978.1,14.5V17M983.3,14.5V17M993.6,14.5V17M998.7,14.5V17M1003.9,14.5V17M1009,14.5V17M1019.3,14.5V17M1024.4,14.5V17M1029.6,14.5V17M1034.7,14.5V17M1045,14.5V17M1050.2,14.5V17M1055.3,14.5V17M1060.4,14.5V17M1070.7,14.5V17M1075.9,14.5V17M1081,14.5V17M1086.2,14.5V17M1096.4,14.5V17M1101.6,14.5V17M1106.7,14.5V17M1111.9,14.5V17M1122.2,14.5V17M1127.3,14.5V17M1132.4,14.5V17M1137.6,14.5V17M1147.9,14.5V17M1153,14.5V17M1158.2,14.5V17M1163.3,14.5V17M1173.6,14.5V17M1178.7,14.5V17M1183.9,14.5V17M1189,14.5V17M1199.3,14.5V17M1204.4,14.5V17M1209.6,14.5V17M1214.7,14.5V17M1225,14.5V17M1230.2,14.5V17M1235.3,14.5V17M1240.4,14.5V17M1250.7,14.5V17M1255.9,14.5V17M1261,14.5V17M1266.2,14.5V17M1276.4,14.5V17M1281.6,14.5V17M1286.7,14.5V17M1291.9,14.5V17M1302.2,14.5V17M1307.3,14.5V17M1312.4,14.5V17M1317.6,14.5V17M1327.9,14.5V17M1333,14.5V17M1338.2,14.5V17M1343.3,14.5V17M1353.6,14.5V17M1358.7,14.5V17M1363.9,14.5V17M1369,14.5V17M1379.3,14.5V17M1384.4,14.5V17M1389.6,14.5V17M1394.7,14.5V17M1405,14.5V17M1410.2,14.5V17M1415.3,14.5V17M1420.4,14.5V17M1430.7,14.5V17M1435.9,14.5V17M1441,14.5V17M1446.2,14.5V17M1456.4,14.5V17M1461.6,14.5V17M1466.7,14.5V17M1471.9,14.5V17M1482.2,14.5V17M1487.3,14.5V17M1492.4,14.5V17M1497.6,14.5V17M1507.9,14.5V17M1513,14.5V17M1518.2,14.5V17M1523.3,14.5V17M1533.6,14.5V17M1538.7,14.5V17M1543.9,14.5V17M1549,14.5V17M1559.3,14.5V17M1564.5,14.5V17M1569.6,14.5V17M1574.7,14.5V17M1585,14.5V17M1590.2,14.5V17M1595.3,14.5V17M1600.5,14.5V17M1610.7,14.5V17M1615.9,14.5V17M1621,14.5V17M1626.2,14.5V17M1636.5,14.5V17M1641.6,14.5V17M1646.7,14.5V17M1651.9,14.5V17M1662.2,14.5V17M1667.3,14.5V17M1672.5,14.5V17M1677.6,14.5V17M1687.9,14.5V17M1693,14.5V17M1698.2,14.5V17M1703.3,14.5V17M1713.6,14.5V17M1718.7,14.5V17M1723.9,14.5V17M1729,14.5V17" stroke-opacity=".75"/></g><g font-family="Liberation Sans, sans-serif" font-size="9.4" letter-spacing="-0.35" fill="#e6e6e6"><text x="90.4" y="11">80</text><text x="141.8" y="11">90</text><text x="193.3" y="11">100</text><text x="244.7" y="11">110</text><text x="296.1" y="11">120</text><text x="347.6" y="11">130</text><text x="399.0" y="11">140</text><text x="450.4" y="11">150</text><text x="501.9" y="11">160</text><text x="553.3" y="11">170</text><text x="604.7" y="11">180</text><text x="656.1" y="11">190</text><text x="707.6" y="11">200</text><text x="759.0" y="11">210</text><text x="810.4" y="11">220</text><text x="861.9" y="11">230</text><text x="913.3" y="11">240</text><text x="964.7" y="11">250</text><text x="1016.1" y="11">260</text><text x="1067.6" y="11">270</text><text x="1119.0" y="11">280</text><text x="1170.4" y="11">290</text><text x="1221.9" y="11">300</text><text x="1273.3" y="11">310</text><text x="1324.7" y="11">320</text><text x="1376.2" y="11">330</text><text x="1427.6" y="11">340</text><text x="1479.0" y="11">350</text><text x="1530.4" y="11">360</text><text x="1581.9" y="11">370</text><text x="1633.3" y="11">380</text><text x="1684.7" y="11">390</text></g><path d="M990.5,2V17" stroke="#ddd" stroke-dasharray="1,1"/></svg>
<svg style="left:56px;top:117px" width="17" height="850" viewBox="0 117 17 850"><g stroke="#d8d8d8" stroke-width="1" shape-rendering="crispEdges"><path d="M2,146.3H17M2,197.7H17M2,249.2H17M2,300.6H17M2,352H17M2,403.4H17M2,454.9H17M2,506.3H17M2,557.7H17M2,609.2H17M2,660.6H17M2,712H17M2,763.5H17M2,814.9H17M2,866.3H17M2,917.8H17"/><path d="M12,120.6H17M12,172H17M12,223.4H17M12,274.9H17M12,326.3H17M12,377.7H17M12,429.2H17M12,480.6H17M12,532H17M12,583.5H17M12,634.9H17M12,686.3H17M12,737.7H17M12,789.2H17M12,840.6H17M12,892H17M12,943.5H17" stroke-opacity=".9"/><path d="M14.5,125.7H17M14.5,130.9H17M14.5,136H17M14.5,141.2H17M14.5,151.4H17M14.5,156.6H17M14.5,161.7H17M14.5,166.9H17M14.5,177.2H17M14.5,182.3H17M14.5,187.4H17M14.5,192.6H17M14.5,202.9H17M14.5,208H17M14.5,213.2H17M14.5,218.3H17M14.5,228.6H17M14.5,233.7H17M14.5,238.9H17M14.5,244H17M14.5,254.3H17M14.5,259.4H17M14.5,264.6H17M14.5,269.7H17M14.5,280H17M14.5,285.2H17M14.5,290.3H17M14.5,295.4H17M14.5,305.7H17M14.5,310.9H17M14.5,316H17M14.5,321.2H17M14.5,331.4H17M14.5,336.6H17M14.5,341.7H17M14.5,346.9H17M14.5,357.2H17M14.5,362.3H17M14.5,367.4H17M14.5,372.6H17M14.5,382.9H17M14.5,388H17M14.5,393.2H17M14.5,398.3H17M14.5,408.6H17M14.5,413.7H17M14.5,418.9H17M14.5,424H17M14.5,434.3H17M14.5,439.5H17M14.5,444.6H17M14.5,449.7H17M14.5,460H17M14.5,465.2H17M14.5,470.3H17M14.5,475.5H17M14.5,485.7H17M14.5,490.9H17M14.5,496H17M14.5,501.2H17M14.5,511.5H17M14.5,516.6H17M14.5,521.7H17M14.5,526.9H17M14.5,537.2H17M14.5,542.3H17M14.5,547.5H17M14.5,552.6H17M14.5,562.9H17M14.5,568H17M14.5,573.2H17M14.5,578.3H17M14.5,588.6H17M14.5,593.7H17M14.5,598.9H17M14.5,604H17M14.5,614.3H17M14.5,619.5H17M14.5,624.6H17M14.5,629.7H17M14.5,640H17M14.5,645.2H17M14.5,650.3H17M14.5,655.5H17M14.5,665.7H17M14.5,670.9H17M14.5,676H17M14.5,681.2H17M14.5,691.5H17M14.5,696.6H17M14.5,701.7H17M14.5,706.9H17M14.5,717.2H17M14.5,722.3H17M14.5,727.5H17M14.5,732.6H17M14.5,742.9H17M14.5,748H17M14.5,753.2H17M14.5,758.3H17M14.5,768.6H17M14.5,773.7H17M14.5,778.9H17M14.5,784H17M14.5,794.3H17M14.5,799.5H17M14.5,804.6H17M14.5,809.7H17M14.5,820H17M14.5,825.2H17M14.5,830.3H17M14.5,835.5H17M14.5,845.7H17M14.5,850.9H17M14.5,856H17M14.5,861.2H17M14.5,871.5H17M14.5,876.6H17M14.5,881.7H17M14.5,886.9H17M14.5,897.2H17M14.5,902.3H17M14.5,907.5H17M14.5,912.6H17M14.5,922.9H17M14.5,928H17M14.5,933.2H17M14.5,938.3H17M14.5,948.6H17M14.5,953.8H17M14.5,958.9H17M14.5,964H17" stroke-opacity=".75"/></g><g font-family="Liberation Sans, sans-serif" font-size="8.4" fill="#e0e0e0" text-anchor="middle"><text x="6.2" y="104.2">1</text><text x="6.2" y="112.3">4</text><text x="6.2" y="120.4">0</text><text x="6.2" y="155.6">1</text><text x="6.2" y="163.7">5</text><text x="6.2" y="171.8">0</text><text x="6.2" y="207.0">1</text><text x="6.2" y="215.1">6</text><text x="6.2" y="223.2">0</text><text x="6.2" y="258.5">1</text><text x="6.2" y="266.6">7</text><text x="6.2" y="274.7">0</text><text x="6.2" y="309.9">1</text><text x="6.2" y="318.0">8</text><text x="6.2" y="326.1">0</text><text x="6.2" y="361.3">1</text><text x="6.2" y="369.4">9</text><text x="6.2" y="377.5">0</text><text x="6.2" y="412.8">2</text><text x="6.2" y="420.9">0</text><text x="6.2" y="428.9">0</text><text x="6.2" y="464.2">2</text><text x="6.2" y="472.3">1</text><text x="6.2" y="480.4">0</text><text x="6.2" y="515.6">2</text><text x="6.2" y="523.7">2</text><text x="6.2" y="531.8">0</text><text x="6.2" y="567.0">2</text><text x="6.2" y="575.1">3</text><text x="6.2" y="583.2">0</text><text x="6.2" y="618.5">2</text><text x="6.2" y="626.6">4</text><text x="6.2" y="634.7">0</text><text x="6.2" y="669.9">2</text><text x="6.2" y="678.0">5</text><text x="6.2" y="686.1">0</text><text x="6.2" y="721.3">2</text><text x="6.2" y="729.4">6</text><text x="6.2" y="737.5">0</text><text x="6.2" y="772.8">2</text><text x="6.2" y="780.9">7</text><text x="6.2" y="789.0">0</text><text x="6.2" y="824.2">2</text><text x="6.2" y="832.3">8</text><text x="6.2" y="840.4">0</text><text x="6.2" y="875.6">2</text><text x="6.2" y="883.7">9</text><text x="6.2" y="891.8">0</text><text x="6.2" y="927.0">3</text><text x="6.2" y="935.1">0</text><text x="6.2" y="943.2">0</text></g><path d="M0,671.5H17" stroke="#ddd" stroke-dasharray="1,1"/></svg>
<div style="left:73px;top:117px;width:1px;height:850px;background:rgba(215,215,215,.8);"></div><div style="left:73px;top:116.500px;width:1663px;height:1px;background:rgba(215,215,215,.55);"></div>
<svg style="left:56px;top:100px" width="17" height="17" viewBox="0 0 17 17"><path d="M8.500,2V17M2,8.500H17" stroke="#999" stroke-dasharray="1,1"/></svg>
<div style="left:0;top:81px;width:56px;height:902px;background:#474747;border-right:1px solid #2a2a2a;"></div>
<div style="left:0;top:82px;width:55px;height:12px;background:#2f2f2f;"></div>
<svg style="left:3px;top:84px" width="9" height="8" viewBox="0 0 9 8"><path d="M4,0.500v7L0.500,4zM8.500,0.500v7L5,4z" fill="#d8d8d8"/></svg>
<div style="left:18px;top:97px;width:21px;height:4px;background:repeating-linear-gradient(90deg,#1f1f1f 0,#1f1f1f 1px,transparent 1px,transparent 2px);"></div>
<div style="left:0;top:176px;width:55px;height:2px;background:linear-gradient(#333 50%,#565656 50%);"></div>
<div style="left:0;top:246px;width:55px;height:2px;background:linear-gradient(#333 50%,#565656 50%);"></div>
<div style="left:0;top:294px;width:55px;height:2px;background:linear-gradient(#333 50%,#565656 50%);"></div>
<div style="left:0;top:343px;width:55px;height:2px;background:linear-gradient(#333 50%,#565656 50%);"></div>
<svg style="left:8.0px;top:112.0px" width="14" height="18" viewBox="0 0 14 18"><path d="M3,1.500v12l3-2.800 2.300,5 2-1-2.300-4.800h4.200z" fill="#161616" stroke="#dcdcdc" stroke-width="1.300" stroke-linejoin="round"/></svg>
<svg style="left:33.0px;top:112.0px" width="14" height="18" viewBox="0 0 14 18"><path d="M3,1.500v12l3-2.800 2.300,5 2-1-2.300-4.800h4.200z" fill="#dcdcdc" stroke="#dcdcdc" stroke-width="1" stroke-linejoin="round"/></svg>
<svg style="left:7.0px;top:132.0px" width="17" height="18" viewBox="0 0 17 18"><path d="M2,1.500h7l4,4v11h-11z" fill="#cfcfcf"/><path d="M9,1.500v4h4" fill="#888"/><path d="M9,9v8l2-1.800 1.600,3 1.300-.7-1.600-3h3z" fill="#eee" stroke="#444" stroke-width=".6"/></svg>
<svg style="left:30.0px;top:133.0px" width="21" height="16" viewBox="0 0 21 16"><path d="M1.500,1v14M19.500,1v14" stroke="#dcdcdc" stroke-width="1.800"/><path d="M4,8h13M7,5l-3,3 3,3M14,5l3,3-3,3" fill="none" stroke="#dcdcdc" stroke-width="1.500"/></svg>
<svg style="left:7.0px;top:153.0px" width="17" height="18" viewBox="0 0 17 18"><path d="M2,9v8h13v-8" fill="none" stroke="#dcdcdc" stroke-width="1.400"/><path d="M4,11.500h9M4,14h9M6.500,11v4M10.500,11v4" stroke="#dcdcdc"/><path d="M5,1l4.500,4.500M9.500,5.500v-3.500M9.500,5.500h-3.500" stroke="#dcdcdc" stroke-width="1.400" fill="none"/></svg>
<svg style="left:32.0px;top:153.0px" width="17" height="18" viewBox="0 0 17 18"><path d="M2,9v8h13v-8" fill="none" stroke="#dcdcdc" stroke-width="1.400"/><path d="M4,11.500h9M4,14h9M6.500,11v4M10.500,11v4" stroke="#dcdcdc"/><path d="M8,7l5-5M13,2v3.500M13,2h-3.500" stroke="#dcdcdc" stroke-width="1.400" fill="none"/></svg>
<div style="left:4px;top:179px;width:23px;height:21px;background:#2b2b2b;border:1px solid #1e1e1e;border-radius:2px;"></div>
<div class="t" style="left:8px;top:180px;font-family:'Liberation Serif',serif;font-size:20px;color:#f0f0f0;">T</div>
<div style="left:22px;top:194px;width:0;height:0;border-left:3px solid transparent;border-bottom:3px solid #ddd;"></div>
<svg style="left:32.0px;top:181.0px" width="16" height="16" viewBox="0 0 16 16"><path d="M2,14.500L14.500,2" stroke="#dcdcdc" stroke-width="1.500"/></svg>
<svg style="left:5.0px;top:202.0px" width="18" height="18" viewBox="0 0 18 18"><path d="M9.500,2l5,5-2,1.500-1,5-8,2.500 2.500-8 5-1z" fill="#dcdcdc"/><circle cx="8.500" cy="10" r="1.200" fill="#444"/><path d="M3.500,16l4.500-5.500" stroke="#444" stroke-width=".8"/><path d="M11,1l5.500,5.500" stroke="#dcdcdc" stroke-width="1.600"/></svg>
<svg style="left:32.0px;top:202.0px" width="18" height="18" viewBox="0 0 18 18"><path d="M12,2l3.500,3.500-8.500,8.500-4.500,1.500 1.500-4.500z" fill="#dcdcdc"/><path d="M10.500,3.500l3.500,3.500" stroke="#555" stroke-width="1.200"/><path d="M3.200,13.800l1.700,-.5-1.200-1.200z" fill="#333"/></svg>
<div style="left:23px;top:216px;width:0;height:0;border-left:3px solid transparent;border-bottom:3px solid #ddd;"></div>
<div style="left:48px;top:216px;width:0;height:0;border-left:3px solid transparent;border-bottom:3px solid #ddd;"></div>
<svg style="left:8.0px;top:226.0px" width="14" height="13" viewBox="0 0 16 15"><rect x="1" y="1" width="14" height="13" fill="#777" stroke="#dcdcdc" stroke-width="1.300"/><path d="M1,1l14,13M15,1l-14,13" stroke="#dcdcdc"/></svg>
<svg style="left:33.0px;top:226.0px" width="14" height="13" viewBox="0 0 16 15"><rect x="1" y="1" width="14" height="13" fill="#8a8a8a" stroke="#dcdcdc" stroke-width="1.300"/></svg>
<div style="left:23px;top:238px;width:0;height:0;border-left:3px solid transparent;border-bottom:3px solid #ddd;"></div>
<div style="left:48px;top:238px;width:0;height:0;border-left:3px solid transparent;border-bottom:3px solid #ddd;"></div>
<svg style="left:6.0px;top:251.0px" width="19" height="17" viewBox="0 0 19 17"><path d="M3,3l12,9M3,13l12,-9" stroke="#dcdcdc" stroke-width="1.600"/><circle cx="14.500" cy="12.500" r="2.300" fill="none" stroke="#dcdcdc" stroke-width="1.400"/><circle cx="14.500" cy="3.800" r="2.300" fill="none" stroke="#dcdcdc" stroke-width="1.400"/></svg>
<svg style="left:31.0px;top:250.0px" width="19" height="18" viewBox="0 0 19 18"><path d="M4,3.500h11M12,1l3,2.500-3,2.500" fill="none" stroke="#dcdcdc" stroke-width="1.300"/><path d="M5,8h12l-4,8h-12z" fill="#777" stroke="#dcdcdc" stroke-width="1.300"/><path d="M9,8l-4,8" stroke="#dcdcdc"/></svg>
<div style="left:48px;top:265px;width:0;height:0;border-left:3px solid transparent;border-bottom:3px solid #ddd;"></div>
<svg style="left:7.0px;top:274.0px" width="16" height="14" viewBox="0 0 16 14"><defs><linearGradient id="tg1"><stop offset="0" stop-color="#f4f4f4"/><stop offset="1" stop-color="#333"/></linearGradient></defs><rect x="0.500" y="0.500" width="15" height="13" fill="url(#tg1)" stroke="#dcdcdc"/></svg>
<svg style="left:32.0px;top:274.0px" width="16" height="14" viewBox="0 0 16 14"><defs><linearGradient id="tg2" x1="0" x2="0" y1="0" y2="1"><stop offset="0" stop-color="#eee"/><stop offset="1" stop-color="#555"/></linearGradient><pattern id="chk" width="4" height="4" patternUnits="userSpaceOnUse"><rect width="2" height="2" fill="#333"/><rect x="2" y="2" width="2" height="2" fill="#333"/></pattern></defs><rect x="0.500" y="0.500" width="15" height="13" fill="url(#tg2)" stroke="#dcdcdc"/><rect x="1" y="5" width="14" height="8" fill="url(#chk)"/></svg>
<svg style="left:7.0px;top:302.0px" width="16" height="16" viewBox="0 0 16 16"><path d="M1,1h14v10l-4,4h-10z" fill="#dcdcdc"/><path d="M3.500,4.500h9M3.500,7.500h9M3.500,10.500h5" stroke="#444" stroke-width="1.200"/><path d="M11,15v-4h4" fill="#888"/></svg>
<svg style="left:31.0px;top:300.0px" width="19" height="19" viewBox="0 0 19 19"><path d="M12,2.500a2.200,2.200 0 0 1 4,2.500l-2.500,2.500-3.500-3.500z" fill="#dcdcdc"/><path d="M9,5l5,5" stroke="#dcdcdc" stroke-width="1.800"/><path d="M10,7l-6,6-1,3 3-1 6-6" fill="none" stroke="#dcdcdc" stroke-width="1.200"/><path d="M1,17.500h9" stroke="#dcdcdc" stroke-width="1.500" stroke-dasharray="2,1"/></svg>
<div style="left:48px;top:315px;width:0;height:0;border-left:3px solid transparent;border-bottom:3px solid #ddd;"></div>
<svg style="left:6.0px;top:320.0px" width="19" height="19" viewBox="0 0 19 19"><path d="M5,10V4.500a1.200,1.200 0 0 1 2.400,0V9 V2.800a1.200,1.200 0 0 1 2.400,0V9 V3.500a1.200,1.200 0 0 1 2.400,0V9.500 V5.500a1.200,1.200 0 0 1 2.400,0V12c0,4-2,6-5,6s-4.500-1.500-6-4l-2-3.500c-.6-1.200 1-2 1.800-1z" fill="#dcdcdc"/></svg>
<svg style="left:32.0px;top:321.0px" width="18" height="18" viewBox="0 0 18 18"><circle cx="7" cy="7" r="5" fill="#888" stroke="#dcdcdc" stroke-width="1.600"/><path d="M10.500,10.500l5.500,5.500" stroke="#dcdcdc" stroke-width="2.600"/></svg>
<svg style="left:20.0px;top:364.0px" width="27" height="27" viewBox="0 0 27 27"><rect x="1.500" y="1.500" width="24" height="24" fill="#000" stroke="#111"/><rect x="7" y="7" width="13" height="13" fill="#777" stroke="#ccc"/></svg>
<svg style="left:8.0px;top:352.0px" width="27" height="27" viewBox="0 0 27 27"><rect x="0.500" y="0.500" width="26" height="26" fill="#fff" stroke="#222"/><path d="M1,26L26,1" stroke="#e0301e" stroke-width="2"/></svg>
<svg style="left:37.0px;top:351.0px" width="12" height="12" viewBox="0 0 12 12"><path d="M2,8V4.500a2,2 0 0 1 2-2H8M6,0.500l2.500,2-2.500,2M10,4v3.500a2,2 0 0 1-2,2" fill="none" stroke="#dcdcdc" stroke-width="1.300"/></svg>
<svg style="left:5.0px;top:383.0px" width="12" height="12" viewBox="0 0 12 12"><rect x="4" y="4" width="7" height="7" fill="#000" stroke="#ddd"/><rect x="0.500" y="0.500" width="7" height="7" fill="#fff" stroke="#222"/><path d="M1,7L7,1" stroke="#e0301e"/></svg>
<div style="left:8px;top:396px;width:17px;height:17px;background:#2e2e2e;border-radius:2px;"></div>
<svg style="left:11.0px;top:398.0px" width="12" height="12" viewBox="0 0 12 12"><rect x="1" y="1" width="10" height="10" fill="#333" stroke="#dcdcdc" stroke-width="1.500"/></svg>
<div class="t b" style="left:33px;top:398px;font-family:'Liberation Serif',serif;font-size:13px;color:#e0e0e0;">T</div>
<svg style="left:6.0px;top:421.0px" width="11" height="11" viewBox="0 0 11 11"><rect x="0.500" y="0.500" width="10" height="10" fill="#4a2c30" stroke="#888"/></svg>
<svg style="left:22.0px;top:421.0px" width="11" height="11" viewBox="0 0 11 11"><defs><linearGradient id="tg3"><stop offset="0" stop-color="#fff"/><stop offset="1" stop-color="#222"/></linearGradient></defs><rect x="0.500" y="0.500" width="10" height="10" fill="url(#tg3)" stroke="#888"/></svg>
<div style="left:35px;top:417px;width:17px;height:18px;background:#2b2b2b;border:1px solid #1e1e1e;border-radius:2px;"></div>
<svg style="left:38.0px;top:421.0px" width="11" height="11" viewBox="0 0 11 11"><rect x="0.500" y="0.500" width="10" height="10" fill="#fff" stroke="#ccc"/><path d="M1,10L10,1" stroke="#e0301e" stroke-width="1.600"/></svg>
<svg style="left:9.0px;top:444.0px" width="13" height="12" viewBox="0 0 13 12"><rect x="1" y="1" width="11" height="10" fill="#333" stroke="#dcdcdc" stroke-width="1.300"/><rect x="3" y="3" width="4" height="3" fill="#dcdcdc"/><rect x="6" y="6.500" width="4" height="2.500" fill="#dcdcdc"/></svg>
<div style="left:28px;top:439px;width:25px;height:23px;background:#2b2b2b;border:1px solid #1e1e1e;border-radius:2px;"></div>
<svg style="left:33.0px;top:443.0px" width="15" height="14" viewBox="0 0 15 14"><rect x="1" y="1" width="13" height="12" fill="#555" stroke="#dcdcdc" stroke-width="1.300"/><path d="M1,4h13" stroke="#dcdcdc" stroke-width="1.300"/></svg>
<div style="left:48px;top:457px;width:0;height:0;border-left:3px solid transparent;border-bottom:3px solid #ddd;"></div>
<div style="left:1736px;top:100px;width:16px;height:867px;background:#383838;"></div>
<div style="left:1737px;top:738px;width:15px;height:185px;background:linear-gradient(90deg,#a6a6a6,#8e8e8e);border-top:1px solid #c0c0c0;"></div>
<div style="left:1739.500px;top:106px;width:0;height:0;border-left:5px solid transparent;border-right:5px solid transparent;border-bottom:6px solid #e6e6e6;"></div>
<div style="left:1739.500px;top:957px;width:0;height:0;border-left:5px solid transparent;border-right:5px solid transparent;border-top:6px solid #e6e6e6;"></div>
<div style="left:56px;top:967px;width:1696px;height:16px;background:#363636;"></div>
<div style="left:56px;top:967px;width:470px;height:16px;background:#484848;border-top:1px solid #5a5a5a;"></div>
<div style="left:940px;top:968px;width:438px;height:15px;background:linear-gradient(#929292,#868686);"></div>
<svg style="left:75.0px;top:970.0px" width="19" height="11" viewBox="0 0 19 11"><rect x="0.700" y="0.700" width="17.600" height="9.600" rx="2" fill="#3a3a3a" stroke="#e2e2e2" stroke-width="1.300"/><circle cx="5.500" cy="5.500" r="2" fill="none" stroke="#e2e2e2" stroke-width="1.300"/><path d="M10,5.500h5M13,3l2.500,2.500L13,8" fill="none" stroke="#e2e2e2" stroke-width="1.300"/></svg>
<svg style="left:101.0px;top:969.0px" width="15" height="13" viewBox="0 0 15 13"><path d="M9,3.500H1.500v8h10V8" fill="none" stroke="#e2e2e2" stroke-width="1.400"/><path d="M5,8c.5-3 3-4.500 6-4.500V1l3.500,3.500L11,8V6C8.500,6 6.500,6.500 5,8z" fill="#e2e2e2"/></svg>
<svg style="left:124.0px;top:970.0px" width="9" height="11" viewBox="0 0 9 11"><path d="M1.500,0.500v10" stroke="#e2e2e2" stroke-width="1.600"/><path d="M8.500,0.500v10L3,5.500z" fill="#e2e2e2"/></svg>
<svg style="left:139.0px;top:970.0px" width="8" height="11" viewBox="0 0 8 11"><path d="M7,0.500v10L1,5.500z" fill="#e2e2e2"/></svg>
<div class="t" style="left:154px;top:971px;font-size:10.500px;color:#f0f0f0;">3</div>
<div style="left:237.0px;top:973.5px;width:0;height:0;border-left:4.0px solid transparent;border-right:4.0px solid transparent;border-top:5px solid #e6e6e6;"></div>
<svg style="left:254.0px;top:970.0px" width="8" height="11" viewBox="0 0 8 11"><path d="M1,0.500v10L7,5.500z" fill="#777"/></svg>
<svg style="left:268.0px;top:970.0px" width="9" height="11" viewBox="0 0 9 11"><path d="M7.500,0.500v10" stroke="#777" stroke-width="1.600"/><path d="M0.500,0.500v10L6,5.500z" fill="#777"/></svg>
<svg style="left:284.0px;top:968.0px" width="18" height="15" viewBox="0 0 18 15"><circle cx="6" cy="7" r="5" fill="none" stroke="#e2e2e2" stroke-width="1.400"/><path d="M4,3h5l3,3v7h-8z" fill="#484848" stroke="#e2e2e2" stroke-width="1.400"/><path d="M8.500,3.500v3h3" fill="none" stroke="#e2e2e2"/><path d="M13,12.500h3.500l-1.700,2z" fill="#e2e2e2"/></svg>
<div class="t" style="left:310px;top:971px;font-size:9.500px;color:#757575;">[Grundprofil] (Arbeitsp...</div>
<div style="left:414.5px;top:973.8px;width:0;height:0;border-left:3.5px solid transparent;border-right:3.5px solid transparent;border-top:4px solid #777;"></div>
<div style="left:429px;top:970.500px;width:10px;height:10px;border-radius:5px;background:#6a6a6a;"></div>
<div class="t" style="left:444px;top:971px;font-size:9.500px;color:#f0f0f0;">Preflight aus</div>
<div style="left:514.5px;top:972.8px;width:0;height:0;border-left:3.5px solid transparent;border-right:3.5px solid transparent;border-top:4px solid #e6e6e6;"></div>
<div class="vsep" style="left:525px;top:968px;height:15px;"></div>
<svg style="left:530.0px;top:970.0px" width="8" height="11" viewBox="0 0 8 11"><path d="M7,0.500v10L1,5.500z" fill="#e2e2e2"/></svg>
<svg style="left:1701.0px;top:970.0px" width="8" height="11" viewBox="0 0 8 11"><path d="M1,0.500v10L7,5.500z" fill="#e2e2e2"/></svg>
<div style="left:1713px;top:967px;width:39px;height:16px;background:#474747;"></div>
<svg style="left:1718.0px;top:969.0px" width="16" height="13" viewBox="0 0 16 13"><rect x="1" y="1" width="14" height="11" fill="#3a3a3a" stroke="#e2e2e2" stroke-width="1.500"/><path d="M8,1v11" stroke="#e2e2e2" stroke-width="1.500"/></svg>
<div style="left:1738px;top:969px;width:13px;height:13px;background-image:radial-gradient(#8a8a8a 0.9px,transparent 1.1px);background-size:2.5px 2.5px;clip-path:polygon(100% 0,100% 100%,0 100%);"></div>
<div style="left:0;top:967px;width:56px;height:16px;background:#474747;"></div>
<div style="left:1752px;top:81px;width:168px;height:902px;background:#2d2d2d;"></div>
<div style="left:1754px;top:81px;width:166px;height:13px;background:#303030;"></div>
<svg style="left:1906.0px;top:84.0px" width="9" height="8" viewBox="0 0 9 8"><path d="M4,0.500v7L0.500,4zM8.500,0.500v7L5,4z" fill="#d8d8d8"/></svg>
<div style="left:1754px;top:94px;width:163px;height:96px;background:#474747;border-top:1px solid #545454;"></div>
<div style="left:1825px;top:97px;width:21px;height:4px;background:repeating-linear-gradient(90deg,#1f1f1f 0,#1f1f1f 1px,transparent 1px,transparent 2px);"></div>
<svg style="left:1763.0px;top:109.0px" width="20" height="19" viewBox="0 0 20 19"><path d="M2,5h7v11h-7zM11,5h7v11h-7z" fill="#dedede"/><path d="M7,2h3v14h-3zM10,2h3l2,2.500v11.500h-5z" fill="#f4f4f4" stroke="#444" stroke-width=".5"/><path d="M10,0.500v17" stroke="#444" stroke-dasharray="2,1"/></svg>
<div class="t b" style="left:1791px;top:113.0px;font-size:10.800px;color:#eaeaea;">Seiten</div>
<svg style="left:1763.0px;top:137.0px" width="20" height="19" viewBox="0 0 20 19"><path d="M10,2l8,4.500-8,4.500-8-4.500z" fill="#dedede"/><path d="M3.500,10.500L2,11.500l8,4.500 8-4.500-1.500-1-6.500,3.700z" fill="#dedede"/></svg>
<div class="t b" style="left:1791px;top:141.0px;font-size:10.800px;color:#eaeaea;">Ebenen</div>
<svg style="left:1763.0px;top:165.0px" width="20" height="19" viewBox="0 0 20 19"><path d="M8,6H5.500a3,3 0 0 0 0,6H8M12,6h2.500a3,3 0 0 1 0,6H12M6.500,9h7" fill="none" stroke="#dedede" stroke-width="1.800"/></svg>
<div class="t b" style="left:1791px;top:169.0px;font-size:10.800px;color:#eaeaea;">Verknüpfungen</div>
<div style="left:1754px;top:191px;width:163px;height:96px;background:#474747;border-top:1px solid #545454;"></div>
<div style="left:1825px;top:194px;width:21px;height:4px;background:repeating-linear-gradient(90deg,#1f1f1f 0,#1f1f1f 1px,transparent 1px,transparent 2px);"></div>
<svg style="left:1763.0px;top:206.0px" width="20" height="19" viewBox="0 0 20 19"><rect x="2" y="3.500" width="16" height="11" fill="#555" stroke="#dedede" stroke-width="1.200"/><path d="M2,9h16M7.300,3.500v11M12.700,3.500v11" stroke="#dedede" stroke-width="1.200"/><rect x="2.600" y="4.100" width="4.200" height="4.400" fill="#dedede"/></svg>
<div class="t b" style="left:1791px;top:210.0px;font-size:10.800px;color:#eaeaea;">Farbfelder</div>
<svg style="left:1763.0px;top:234.0px" width="20" height="19" viewBox="0 0 20 19"><path d="M1.500,4.500h17" stroke="#dedede" stroke-width="1.200"/><path d="M1.500,8.500h17" stroke="#dedede" stroke-width="2"/><path d="M1.500,13.500h17" stroke="#dedede" stroke-width="3.400"/></svg>
<div class="t b" style="left:1791px;top:238.0px;font-size:10.800px;color:#eaeaea;">Kontur</div>
<svg style="left:1763.0px;top:262.0px" width="20" height="19" viewBox="0 0 20 19"><defs><linearGradient id="dg1"><stop offset="0" stop-color="#222"/><stop offset="1" stop-color="#f4f4f4"/></linearGradient></defs><rect x="2" y="3.500" width="16" height="11" fill="url(#dg1)" stroke="#dedede" stroke-width="1.200"/></svg>
<div class="t b" style="left:1791px;top:266.0px;font-size:10.800px;color:#eaeaea;">Verlauf</div>
<div style="left:1754px;top:288px;width:163px;height:40px;background:#474747;border-top:1px solid #545454;"></div>
<div style="left:1825px;top:291px;width:21px;height:4px;background:repeating-linear-gradient(90deg,#1f1f1f 0,#1f1f1f 1px,transparent 1px,transparent 2px);"></div>
<svg style="left:1763.0px;top:303.0px" width="20" height="19" viewBox="0 0 20 19"><text x="2" y="14" font-family="Liberation Serif, serif" font-style="italic" font-size="16" fill="#dedede">fx</text></svg>
<div class="t b" style="left:1791px;top:307.0px;font-size:10.800px;color:#eaeaea;">Effekte</div>
<div style="left:1754px;top:329px;width:163px;height:96px;background:#474747;border-top:1px solid #545454;"></div>
<div style="left:1825px;top:332px;width:21px;height:4px;background:repeating-linear-gradient(90deg,#1f1f1f 0,#1f1f1f 1px,transparent 1px,transparent 2px);"></div>
<svg style="left:1763.0px;top:344.0px" width="20" height="19" viewBox="0 0 20 19"><rect x="2.600" y="9.600" width="5.500" height="5.500" fill="#474747" stroke="#dedede" stroke-width="1.200"/><rect x="5.600" y="12.400" width="5.500" height="5" fill="#474747" stroke="#dedede" stroke-width="1.200"/><text x="9.500" y="11" font-family="Liberation Sans, sans-serif" font-size="13" fill="#dedede">A</text></svg>
<div class="t b" style="left:1791px;top:348.0px;font-size:10.800px;color:#eaeaea;">Zeichenformate</div>
<svg style="left:1763.0px;top:372.0px" width="20" height="19" viewBox="0 0 20 19"><rect x="2.600" y="9.600" width="5.500" height="5.500" fill="#474747" stroke="#dedede" stroke-width="1.200"/><rect x="5.600" y="12.400" width="5.500" height="5" fill="#474747" stroke="#dedede" stroke-width="1.200"/><path d="M14,2v12M17,2v12M18,2h-5a3,3 0 0 0 0,6h1z" fill="#dedede" stroke="#dedede" stroke-width="1.200"/></svg>
<div class="t b" style="left:1791px;top:376.0px;font-size:10.800px;color:#eaeaea;">Absatzformate</div>
<svg style="left:1763.0px;top:400.0px" width="20" height="19" viewBox="0 0 20 19"><rect x="2.600" y="9.600" width="5.500" height="5.500" fill="#474747" stroke="#dedede" stroke-width="1.200"/><rect x="5.600" y="12.400" width="5.500" height="5" fill="#474747" stroke="#dedede" stroke-width="1.200"/><rect x="8.500" y="1.500" width="10" height="9.500" fill="#999" stroke="#dedede" stroke-width="1.200"/></svg>
<div class="t b" style="left:1791px;top:404.0px;font-size:10.800px;color:#eaeaea;">Objektformate</div>
<div style="left:1754px;top:426px;width:163px;height:96px;background:#474747;border-top:1px solid #545454;"></div>
<div style="left:1825px;top:429px;width:21px;height:4px;background:repeating-linear-gradient(90deg,#1f1f1f 0,#1f1f1f 1px,transparent 1px,transparent 2px);"></div>
<svg style="left:1763.0px;top:441.0px" width="20" height="19" viewBox="0 0 20 19"><path d="M2.500,2.500h15v13h-15zM2.500,6.800h15M2.500,11h15M7.500,6.800v8.700" fill="none" stroke="#dedede" stroke-width="1.300"/><rect x="2.500" y="2.500" width="15" height="4" fill="#dedede" opacity=".35"/></svg>
<div class="t b" style="left:1791px;top:445.0px;font-size:10.800px;color:#eaeaea;">Tabelle</div>
<svg style="left:1763.0px;top:469.0px" width="20" height="19" viewBox="0 0 20 19"><rect x="2.600" y="9.600" width="5.500" height="5.500" fill="#474747" stroke="#dedede" stroke-width="1.200"/><rect x="5.600" y="12.400" width="5.500" height="5" fill="#474747" stroke="#dedede" stroke-width="1.200"/><path d="M8.500,1.500h10v9.500h-7M8.500,1.500v6M8.500,4.700h10M11,7.800h7.500M11.500,4.700v6.300" fill="none" stroke="#dedede" stroke-width="1.200"/></svg>
<div class="t b" style="left:1791px;top:473.0px;font-size:10.800px;color:#eaeaea;">Tabellenformate</div>
<div style="left:1758px;top:494px;width:156px;height:24px;background:#2c2c2c;border-radius:3px;"></div>
<svg style="left:1763.0px;top:497.0px" width="20" height="19" viewBox="0 0 20 19"><rect x="2.600" y="9.600" width="5.500" height="5.500" fill="#474747" stroke="#dedede" stroke-width="1.200"/><rect x="5.600" y="12.400" width="5.500" height="5" fill="#474747" stroke="#dedede" stroke-width="1.200"/><path d="M8.500,1.500h10v9.500h-7M8.500,1.500v6M8.500,4.700h10" fill="none" stroke="#dedede" stroke-width="1.200"/><rect x="11.500" y="5.300" width="7" height="5.700" fill="#aaa"/></svg>
<div class="t b" style="left:1791px;top:501.0px;font-size:10.800px;color:#eaeaea;">Zellenformate</div>
<div style="left:1754px;top:523px;width:163px;height:68px;background:#474747;border-top:1px solid #545454;"></div>
<div style="left:1825px;top:526px;width:21px;height:4px;background:repeating-linear-gradient(90deg,#1f1f1f 0,#1f1f1f 1px,transparent 1px,transparent 2px);"></div>
<svg style="left:1763.0px;top:538.0px" width="20" height="19" viewBox="0 0 20 19"><path d="M1,6h5M3.800,3.500l2.500,2.500-2.500,2.500" fill="none" stroke="#dedede" stroke-width="1.500"/><path d="M8,1.500h6l3,3v5" fill="none" stroke="#dedede" stroke-dasharray="1.500,1"/><circle cx="13.500" cy="13" r="3.200" fill="#dedede"/><g stroke="#dedede" stroke-width="1.700"><path d="M13.500,8v10M8.500,13h10M10,9.500l7,7M17,9.500l-7,7"/></g><circle cx="13.500" cy="13" r="1.200" fill="#474747"/></svg>
<div class="t b" style="left:1791px;top:542.0px;font-size:10.800px;color:#eaeaea;">Datenzusammenführ...</div>
<svg style="left:1763.0px;top:566.0px" width="20" height="19" viewBox="0 0 20 19"><path d="M15.500,3.500c-2-2.500-9-2.500-9.500,1.500s8,3.500 8.500,7.500-6,5-10,2.500c3,.5 6.500,0 6-2.500s-8.500-3-8-7.500 10-5.500 13-1.500z" fill="#dedede"/></svg>
<div class="t b" style="left:1791px;top:570.0px;font-size:10.800px;color:#eaeaea;">Skripte</div>
<div style="left:1754px;top:592px;width:163px;height:96px;background:#474747;border-top:1px solid #545454;"></div>
<div style="left:1825px;top:595px;width:21px;height:4px;background:repeating-linear-gradient(90deg,#1f1f1f 0,#1f1f1f 1px,transparent 1px,transparent 2px);"></div>
<svg style="left:1763.0px;top:607.0px" width="20" height="19" viewBox="0 0 20 19"><text x="1.500" y="16" font-family="Liberation Serif, serif" font-style="italic" font-size="19" fill="none" stroke="#dedede" stroke-width=".9">A</text></svg>
<div class="t b" style="left:1791px;top:611.0px;font-size:10.800px;color:#eaeaea;">Glyphen</div>
<svg style="left:1763.0px;top:635.0px" width="20" height="19" viewBox="0 0 20 19"><text x="1" y="15.500" font-family="Liberation Sans, sans-serif" font-size="17" fill="#dedede">A</text><path d="M15.500,1v17" stroke="#dedede" stroke-width="1.200"/></svg>
<div class="t b" style="left:1791px;top:639.0px;font-size:10.800px;color:#eaeaea;">Zeichen</div>
<svg style="left:1763.0px;top:663.0px" width="20" height="19" viewBox="0 0 20 19"><path d="M10.500,3h-2.500a3.300,3.300 0 0 0 0,6.600h2.500z" fill="#dedede"/><path d="M8,3h7.500M10.800,3v13M13.800,3v13" fill="none" stroke="#dedede" stroke-width="1.300"/></svg>
<div class="t b" style="left:1791px;top:667.0px;font-size:10.800px;color:#eaeaea;">Absatz</div>
<div style="left:1754px;top:689px;width:163px;height:292px;background:#474747;border-top:1px solid #545454;"></div>
<!-- panels -->
<div style="left:122px;top:435px;width:209px;height:367px;background:#484848;border:1px solid #222;box-shadow:0 1px 5px rgba(0,0,0,.4);"></div>
<div style="left:123px;top:436px;width:207px;height:12px;background:#353535;"></div>
<svg style="left:127px;top:438px" width="8" height="8" viewBox="0 0 8 8"><path d="M1.500,1.500l5,5M6.500,1.500l-5,5" stroke="#e6e6e6" stroke-width="1.300"/></svg>
<svg style="left:318.0px;top:439.0px" width="8" height="6" viewBox="0 0 8 6"><path d="M3.500,0.300v5.400L0.300,3zM7.700,0.300v5.400L4.500,3z" fill="#c8c8c8"/></svg>
<div style="left:123px;top:448px;width:207px;height:17px;background:#2e2e2e;border-bottom:1px solid #262626;"></div><div style="left:199px;top:465px;width:131px;height:1px;background:#505050;"></div>
<div style="left:123px;top:448px;width:75px;height:17px;background:#484848;border-right:1px solid #2a2a2a;"></div>
<div style="left:198px;top:449px;width:68px;height:15px;background:#3a3a3a;border-right:1px solid #262626;"></div>
<svg style="left:127.0px;top:452.5px" width="6" height="8" viewBox="0 0 6 8"><path d="M0.700,3L3,0.700 5.300,3M0.700,5L3,7.300 5.300,5" fill="none" stroke="#e0e0e0" stroke-width="1.100"/></svg>
<div class="t b" style="left:136px;top:451px;font-size:10.500px;color:#f2f2f2;">Ausrichten</div>
<div class="t b" style="left:205px;top:451px;font-size:10.500px;color:#b9b9b9;">Pathfinder</div>
<svg style="left:312.0px;top:452.0px" width="15" height="10" viewBox="0 0 15 10"><path d="M0,2.500h4.500l-2.200,2.800z" fill="#e4e4e4"/><path d="M5,1.500h10M5,4.500h10M5,7.500h10" stroke="#e4e4e4" stroke-width="1.200"/></svg>
<div class="t ui9" style="left:127px;top:472px;">Objekte ausrichten:</div>
<svg style="left:131.0px;top:485.0px" width="18" height="18" viewBox="0 0 18 18"><path d="M2.500,1v16" stroke="#dedede" stroke-width="1.200" fill="none"/><rect x="4.500" y="3.500" width="7" height="4" fill="#dedede"/><rect x="4.500" y="10.500" width="11" height="4.500" stroke="#dedede" stroke-width="1.200" fill="none"/></svg>
<svg style="left:163.0px;top:485.0px" width="18" height="18" viewBox="0 0 18 18"><path d="M9,0.500v17" stroke="#dedede" stroke-width="1.200" fill="none"/><rect x="5.500" y="3.500" width="7" height="4" fill="#dedede"/><rect x="3" y="10.500" width="12" height="4.500" fill="#484848" stroke="#dedede" stroke-width="1.200"/></svg>
<svg style="left:196.0px;top:485.0px" width="18" height="18" viewBox="0 0 18 18"><path d="M15.500,1v16" stroke="#dedede" stroke-width="1.200" fill="none"/><rect x="6.500" y="3.500" width="7" height="4" fill="#dedede"/><rect x="2.500" y="10.500" width="11" height="4.500" stroke="#dedede" stroke-width="1.200" fill="none"/></svg>
<svg style="left:236.0px;top:485.0px" width="18" height="18" viewBox="0 0 18 18"><path d="M1,2.500h16" stroke="#dedede" stroke-width="1.200" fill="none"/><rect x="3.500" y="4.500" width="4.500" height="11" stroke="#dedede" stroke-width="1.200" fill="none"/><rect x="10.500" y="4.500" width="4.500" height="6.500" fill="#dedede"/></svg>
<svg style="left:268.0px;top:485.0px" width="18" height="18" viewBox="0 0 18 18"><path d="M0.500,9h17" stroke="#dedede" stroke-width="1.200" fill="none"/><rect x="3.500" y="3" width="4.500" height="12" fill="#484848" stroke="#dedede" stroke-width="1.200"/><rect x="10.500" y="5.500" width="4.500" height="7" fill="#dedede"/></svg>
<svg style="left:300.0px;top:485.0px" width="18" height="18" viewBox="0 0 18 18"><path d="M1,16.500h16" stroke="#dedede" stroke-width="1.200" fill="none"/><rect x="3.500" y="3.500" width="4.500" height="11" stroke="#dedede" stroke-width="1.200" fill="none"/><rect x="10.500" y="8" width="4.500" height="6.500" fill="#dedede"/></svg>
<div style="left:127px;top:506px;width:200px;height:1px;background:#3a3a3a;"></div>
<div class="t ui9" style="left:127px;top:513px;">Objekte verteilen:</div>
<svg style="left:131.0px;top:525.0px" width="18" height="18" viewBox="0 0 18 18"><path d="M1,3.500h16M1,11.500h16" stroke="#dedede" stroke-width="1.200" fill="none"/><rect x="5" y="4.500" width="8" height="3.500" fill="#dedede"/><rect x="4" y="12.500" width="10" height="3.500" stroke="#dedede" stroke-width="1.200" fill="none"/></svg>
<svg style="left:163.0px;top:525.0px" width="18" height="18" viewBox="0 0 18 18"><path d="M1,6h16M1,13.500h16" stroke="#dedede" stroke-width="1.200" fill="none"/><rect x="5" y="4" width="8" height="4" fill="#dedede"/><rect x="4" y="11.500" width="10" height="4" fill="#484848" stroke="#dedede" stroke-width="1.200"/></svg>
<svg style="left:195.0px;top:525.0px" width="18" height="18" viewBox="0 0 18 18"><path d="M1,8h16M1,16h16" stroke="#dedede" stroke-width="1.200" fill="none"/><rect x="5" y="4" width="8" height="3.500" fill="#dedede"/><rect x="4" y="12" width="10" height="3.500" stroke="#dedede" stroke-width="1.200" fill="none"/></svg>
<svg style="left:236.0px;top:525.0px" width="18" height="18" viewBox="0 0 18 18"><path d="M3.500,1v16M11.500,1v16" stroke="#dedede" stroke-width="1.200" fill="none"/><rect x="4.500" y="4" width="3.500" height="10" stroke="#dedede" stroke-width="1.200" fill="none"/><rect x="12.500" y="5.500" width="3.500" height="7" fill="#dedede"/></svg>
<svg style="left:268.0px;top:525.0px" width="18" height="18" viewBox="0 0 18 18"><path d="M6,1v16M13.500,1v16" stroke="#dedede" stroke-width="1.200" fill="none"/><rect x="4" y="4" width="4" height="10" fill="#484848" stroke="#dedede" stroke-width="1.200"/><rect x="11.500" y="5.500" width="4" height="7" fill="#dedede"/></svg>
<svg style="left:299.0px;top:525.0px" width="18" height="18" viewBox="0 0 18 18"><path d="M8,1v16M16,1v16" stroke="#dedede" stroke-width="1.200" fill="none"/><rect x="4" y="5.500" width="3.500" height="7" fill="#dedede"/><rect x="12" y="4" width="3.500" height="10" stroke="#dedede" stroke-width="1.200" fill="none"/></svg>
<div style="left:129px;top:549px;width:11px;height:11px;background:#5c5c5c;border:1px solid #333;"></div>
<div class="t ui9" style="left:145px;top:550.500px;">Abstand verwenden</div>
<div class="stp" style="left:240px;top:548.0px;width:12px;height:13px;opacity:.45;"></div>
<div class="fld" style="left:255px;top:549px;width:47px;height:12px;background:#8a8a8a;"><span class="t" style="color:#aaa;font-size:9px;top:0.500px">0 mm</span></div>
<div class="t ui9" style="left:179px;top:575.500px;">Ausrichten an:</div>
<svg style="left:241.0px;top:570.0px" width="22" height="19" viewBox="0 0 22 19"><path d="M3,1v17" stroke="#dedede" stroke-width="1.200" fill="none"/><path d="M5,3.500h9v4.500h-9zM5,10.500h12v5h-12z" fill="none" stroke="#dedede" stroke-width="1.100" stroke-dasharray="1.500,1"/><path d="M15.500,14.500h5l-2.500,3z" fill="#e4e4e4"/></svg>
<div style="left:127px;top:594px;width:200px;height:1px;background:#3a3a3a;"></div>
<div class="t ui9" style="left:128px;top:602.500px;">Abstand verteilen:</div>
<svg style="left:132.0px;top:616.0px" width="18" height="18" viewBox="0 0 18 18"><path d="M1,6.500h5M1,11.500h5" stroke="#dedede" stroke-width="1.200" fill="none"/><rect x="7" y="2.500" width="5" height="5" fill="#dedede"/><rect x="6.500" y="10.500" width="9" height="5" stroke="#dedede" stroke-width="1.200" fill="none"/></svg>
<svg style="left:164.0px;top:616.0px" width="18" height="18" viewBox="0 0 18 18"><path d="M7,1v4M11,1v4" stroke="#dedede" stroke-width="1.200" fill="none"/><rect x="3.500" y="6.500" width="4.500" height="9.500" stroke="#dedede" stroke-width="1.200" fill="none"/><rect x="10.500" y="7" width="5" height="5" fill="#dedede"/></svg>
<div style="left:130px;top:640px;width:11px;height:11px;background:#6a6a6a;border:1px solid #333;"></div>
<svg style="left:131.0px;top:637.0px" width="13" height="13" viewBox="0 0 13 13"><path d="M2,7l3,3.500L11.500,1" fill="none" stroke="#f2f2f2" stroke-width="1.700"/></svg>
<div class="t ui9" style="left:146px;top:641.500px;">Abstand verwenden</div>
<div class="stp" style="left:241px;top:639.0px;width:12px;height:13px;"></div>
<div class="fld" style="left:256px;top:640px;width:47px;height:12px;"><span class="t" style="font-size:9px;top:0.500px">8 mm</span></div>
<div style="left:123px;top:660px;width:207px;height:18px;background:#2e2e2e;border-top:1px solid #262626;border-bottom:1px solid #262626;"></div>
<div style="left:123px;top:661px;width:92px;height:17px;background:#484848;border-right:1px solid #2a2a2a;"></div>
<svg style="left:127.0px;top:665.5px" width="6" height="8" viewBox="0 0 6 8"><path d="M0.700,3L3,0.700 5.300,3M0.700,5L3,7.300 5.300,5" fill="none" stroke="#e0e0e0" stroke-width="1.100"/></svg>
<div class="t b" style="left:136px;top:664px;font-size:10.500px;color:#f2f2f2;">Informationen</div>
<svg style="left:312.0px;top:665.0px" width="15" height="10" viewBox="0 0 15 10"><path d="M0,2.500h4.500l-2.200,2.800z" fill="#e4e4e4"/><path d="M5,1.500h10M5,4.500h10M5,7.500h10" stroke="#e4e4e4" stroke-width="1.200"/></svg>
<div class="t ui9" style="left:146.500px;top:684.5px;">X:0 mm</div>
<div class="t ui9" style="left:146.500px;top:696.5px;">Y:0 mm</div>
<div class="t ui9" style="left:146.500px;top:708.5px;">D:</div>
<div class="t ui9" style="left:249px;top:684.5px;">B:139,7 mm</div>
<div class="t ui9" style="left:249px;top:696.5px;">H:28,317 mm</div>
<svg style="left:127.0px;top:692.0px" width="12" height="12" viewBox="0 0 12 12"><path d="M5.500,0.500v10M0.500,5.500h10" stroke="#dedede" stroke-width="1.100"/><path d="M8,8.500h3l-1.500,2z" fill="#dedede"/></svg>
<svg style="left:230.0px;top:691.0px" width="12" height="13" viewBox="0 0 12 13"><path d="M3,2.500h7.500v8h-7.500z" fill="none" stroke="#dedede" stroke-width="1.100"/><path d="M1,4.500h3M8.500,0.500v3" stroke="#dedede"/><path d="M0,9l2,2 2-2" fill="none" stroke="#dedede" stroke-width=".9"/></svg>
<svg style="left:246.0px;top:708.0px" width="11" height="9" viewBox="0 0 11 9"><path d="M0.500,8.500h10L7,1.500z" fill="none" stroke="#dedede" stroke-width="1.100"/><path d="M4.500,8.500a4,4 0 0 0-1-3" fill="none" stroke="#dedede"/></svg>
<div style="left:225px;top:681px;width:1px;height:37px;background:#3a3a3a;"></div>
<div style="left:127px;top:720px;width:200px;height:1px;background:#3a3a3a;"></div>
<div style="left:127px;top:748px;width:200px;height:1px;background:#3a3a3a;"></div>
<div class="t ui9" style="left:190.5px;top:756.0px;">Zeichen: 28</div>
<div class="t ui9" style="left:195.5px;top:768.0px;">Wörter: 5</div>
<div class="t ui9" style="left:198.5px;top:780.0px;">Zeilen: 4</div>
<div class="t ui9" style="left:190.0px;top:792.0px;">Absätze: 5</div>
<div style="left:1544px;top:423px;width:209px;height:189px;background:#484848;border:1px solid #262626;box-shadow:0 1px 5px rgba(0,0,0,.4);"></div>
<div style="left:1545px;top:424px;width:207px;height:20px;background:#333;border-top:3px solid #282828;border-bottom:1px solid #2a2a2a;"></div>
<div style="left:1546px;top:427px;width:50px;height:17px;background:#3d3d3d;"></div>
<div style="left:1596px;top:426px;width:90px;height:19px;background:#484848;border-left:1px solid #2a2a2a;border-right:1px solid #2a2a2a;"></div>
<div class="t b" style="left:1552px;top:430px;font-size:10.500px;color:#b5b5b5;">Tab</div>
<div class="t b" style="left:1577px;top:430px;font-size:10.500px;color:#b5b5b5;">Tab</div>
<svg style="left:1599.0px;top:431.5px" width="6" height="8" viewBox="0 0 6 8"><path d="M0.700,3L3,0.700 5.300,3M0.700,5L3,7.300 5.300,5" fill="none" stroke="#e0e0e0" stroke-width="1.100"/></svg>
<div class="t b" style="left:1608px;top:430px;font-size:10.500px;color:#f2f2f2;">Zellenformate</div>
<svg style="left:1711.0px;top:431.0px" width="10" height="9" viewBox="0 0 10 9"><path d="M0.500,0.500v8L4.500,4.500zM5.500,0.500v8L9.500,4.500z" fill="#e0e0e0"/></svg>
<div class="vsep" style="left:1727px;top:427px;height:15px;"></div>
<svg style="left:1734.0px;top:431.0px" width="15" height="10" viewBox="0 0 15 10"><path d="M0,2.500h4.500l-2.200,2.800z" fill="#e4e4e4"/><path d="M5,1.500h10M5,4.500h10M5,7.500h10" stroke="#e4e4e4" stroke-width="1.200"/></svg>
<div class="t ui9" style="left:1547.500px;top:451.500px;">Kopfzeile</div>
<svg style="left:1737.0px;top:447.0px" width="10" height="16" viewBox="0 0 10 16"><path d="M7,0.500L1.500,8.500h3.500L3,15.500 8.500,6.500h-3.500z" fill="#dcdcdc"/></svg>
<div style="left:1545px;top:466px;width:207px;height:1px;background:#2e2e2e;"></div>
<div style="left:1545px;top:467px;width:195px;height:117px;background:#454545;"></div>
<div style="left:1545px;top:487px;width:195px;height:19px;background:#4a5a78;"></div>
<div style="left:1545px;top:486.0px;width:195px;height:1px;background:#323232;"></div>
<div style="left:1545px;top:506.0px;width:195px;height:1px;background:#323232;"></div>
<div style="left:1545px;top:526.5px;width:195px;height:1px;background:#323232;"></div>
<div style="left:1545px;top:547.0px;width:195px;height:1px;background:#323232;"></div>
<div class="t ui9" style="left:1575px;top:472.5px;color:#f0f0f0;">[Ohne]</div>
<div class="t ui9 b" style="left:1575px;top:492.5px;color:#f0f0f0;">Kopfzeile</div>
<div class="t ui9" style="left:1575px;top:512.5px;color:#f0f0f0;">Körperzeile</div>
<div class="t ui9" style="left:1575px;top:532.5px;color:#f0f0f0;">Fußzeile</div>
<svg style="left:1704.0px;top:470.0px" width="15" height="14" viewBox="0 0 15 14"><path d="M2,12.500L9,5.500l2.500,2.500-7,5.500-3.500,.5z" fill="#cfcfcf"/><path d="M10,4.500l1.500-1.500 2.500,2.500-1.500,1.500z" fill="#cfcfcf"/><path d="M2,2l11,11" stroke="#f2f2f2" stroke-width="1.300"/></svg>
<div style="left:1740px;top:467px;width:12px;height:117px;background:#3c3c3c;border-left:1px solid #303030;"></div>
<div style="left:1742.500px;top:472px;width:0;height:0;border-left:3.500px solid transparent;border-right:3.500px solid transparent;border-bottom:5px solid #6c6c6c;"></div>
<div style="left:1742.500px;top:575px;width:0;height:0;border-left:3.500px solid transparent;border-right:3.500px solid transparent;border-top:5px solid #6c6c6c;"></div>
<div style="left:1545px;top:584px;width:207px;height:1px;background:#2e2e2e;"></div>
<div class="t ui9" style="left:1547.500px;top:590px;">[Ohne]</div>
<svg style="left:1599.0px;top:588.0px" width="14" height="12" viewBox="0 0 14 12"><path d="M1,2h4.500l1.500,1.500h6v8h-12z" fill="#cfcfcf"/></svg>
<svg style="left:1623.0px;top:587.0px" width="20" height="14" viewBox="0 0 20 14"><rect x="1" y="1.500" width="6" height="6" fill="#777" stroke="#8a8a8a"/><rect x="4" y="5" width="6" height="6" fill="#555" stroke="#8a8a8a"/><path d="M12,6h4a2.500,2.500 0 0 1 0,5h-3M13.500,4l-2,2 2,2" fill="none" stroke="#8a8a8a" stroke-width="1.100"/></svg>
<svg style="left:1651.0px;top:587.0px" width="21" height="14" viewBox="0 0 21 14"><rect x="1" y="2" width="12" height="9" fill="#5a5a5a" stroke="#8a8a8a" stroke-width="1.200"/><rect x="3.500" y="4.500" width="7" height="4" fill="#8a8a8a"/><path d="M15,6.500h5M17.500,4v5" stroke="#8a8a8a" stroke-width="1.100"/></svg>
<svg style="left:1684.0px;top:587.0px" width="14" height="14" viewBox="0 0 14 14"><path d="M1.500,1.500h11v11h-6.500l-4.500-4.500z" fill="#d6d6d6"/><path d="M1.500,8h4.500v4.500" fill="#484848" stroke="#d6d6d6" stroke-width="1"/></svg>
<svg style="left:1712.0px;top:587.0px" width="14" height="14" viewBox="0 0 14 14"><path d="M1,3.500h12M5,3.500v-2h4v2" fill="none" stroke="#d6d6d6" stroke-width="1.300"/><path d="M2.500,5h9l-.8,8.500h-7.400z" fill="none" stroke="#d6d6d6" stroke-width="1.300"/><path d="M5.300,6.500v5.500M7,6.500v5.500M8.700,6.500v5.500" stroke="#d6d6d6"/></svg>
<div style="left:1739px;top:590px;width:12px;height:12px;background-image:radial-gradient(#262626 0.9px,transparent 1.1px);background-size:2.5px 2.5px;clip-path:polygon(100% 0,100% 100%,0 100%);"></div>
<div style="left:1545px;top:602px;width:207px;height:1px;background:#2e2e2e;"></div>
<div style="left:1638px;top:604px;width:21px;height:5px;background:repeating-linear-gradient(90deg,#1f1f1f 0,#1f1f1f 1px,transparent 1px,transparent 2px);"></div>
<div style="left:1918px;top:0;width:2px;height:983px;background:#0c0c0c;"></div><div style="left:0;top:982px;width:1920px;height:1px;background:#0c0c0c;"></div>
</div></body></html>
